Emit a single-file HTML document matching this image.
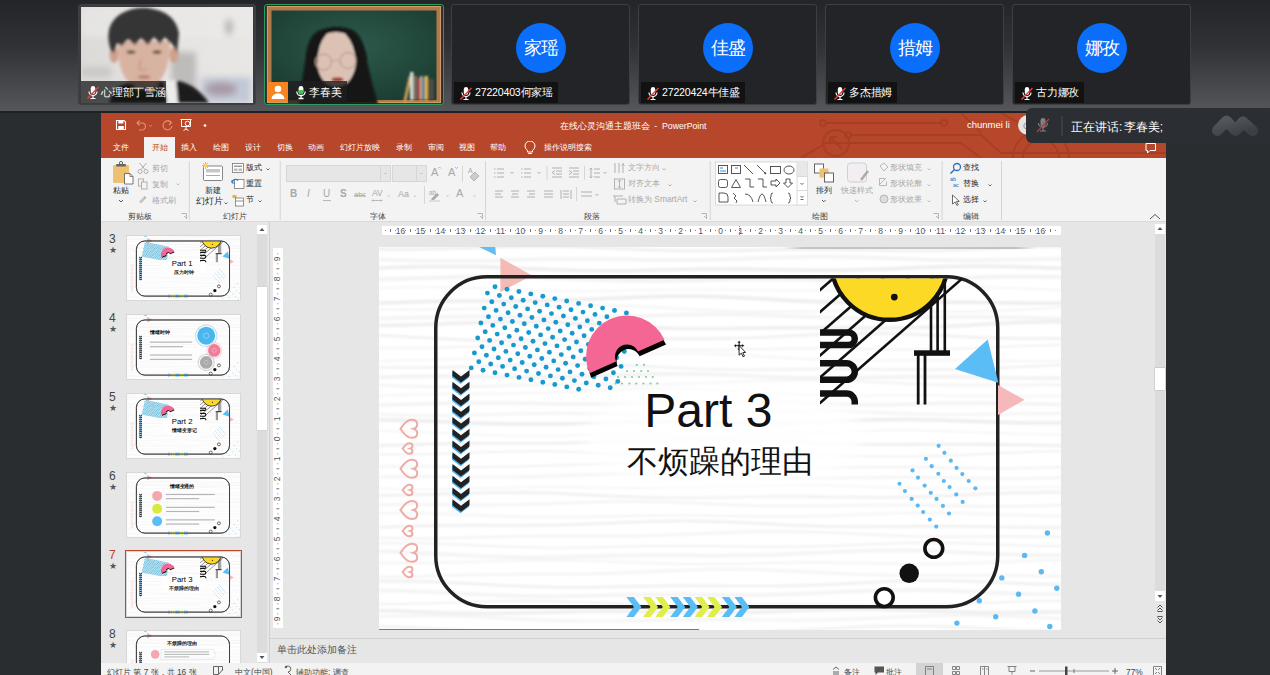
<!DOCTYPE html>
<html><head><meta charset="utf-8">
<style>
*{margin:0;padding:0;box-sizing:border-box}
html,body{width:1270px;height:675px;overflow:hidden;background:#2a2d30;font-family:"Liberation Sans",sans-serif;position:relative}
.a{position:absolute}
svg{display:block}
#top{left:0;top:0;width:1270px;height:112px;background:linear-gradient(#232528 0%,#2f3135 40%,#55575b 100%)}
#topline{left:0;top:111px;width:1270px;height:2px;background:#1f2124}
.tile{position:absolute;top:4px;height:101px;background:#232427;border:1px solid #3d3f43;border-radius:3px;overflow:hidden}
.av{position:absolute;width:50px;height:50px;border-radius:50%;background:#0a6efa;color:#fff;font-size:18px;line-height:50px;text-align:center;letter-spacing:-1px}
.lbl{position:absolute;left:2px;top:77px;height:21px;background:#121212;color:#fff;font-size:10.6px;line-height:21px;padding:0 5px 0 21px;white-space:nowrap;letter-spacing:-0.2px}
.mic{position:absolute;left:5px;top:4px}
#ppt{left:101px;top:113px;width:1065px;height:562px;background:#e6e6e6;overflow:hidden}
#title{left:0;top:0;width:1065px;height:45px;background:#b7472a;overflow:hidden}
#ribbon{left:0;top:45px;width:1065px;height:64px;background:#f3f3f3;border-bottom:1px solid #d9d9d9}
.tab{position:absolute;top:24px;height:21px;line-height:21px;color:#fff;font-size:8.4px;text-align:center;white-space:nowrap}
.rt{position:absolute;font-size:9.5px;color:#333;white-space:nowrap;line-height:12px}
.gr{color:#a8a8a8}
.gl{position:absolute;top:97px;font-size:9.5px;color:#444;line-height:12px;white-space:nowrap;transform:translateX(-50%)}
.sep{position:absolute;top:48px;width:1px;height:59px;background:#d6d6d6}
#status{left:0;top:550px;width:1065px;height:12px;background:#f3f3f3}
.st{position:absolute;top:0;font-size:9.5px;color:#444;line-height:14px;white-space:nowrap}
#slide{left:278px;top:134px;width:682px;height:383px;background:#fff;overflow:hidden}
.thumb{position:absolute;left:26px;width:113px;height:64px;background:#fff;overflow:hidden;box-shadow:0 0 0 1px #d8d8d8}
.tn{position:absolute;left:8px;font-size:12px;color:#444;line-height:12px}
.star{position:absolute;left:8px;font-size:9px;color:#555;line-height:10px}
#toast{left:1026px;top:108px;width:250px;height:35px;background:#2b2e32;border-radius:6px;overflow:hidden}
</style></head><body>
<svg width="0" height="0" style="position:absolute;left:0;top:0"><defs>
<filter id="tb" x="-5%" y="-20%" width="110%" height="140%"><feGaussianBlur stdDeviation="0.9"/></filter>
<filter id="blur8" x="-50%" y="-50%" width="200%" height="200%"><feGaussianBlur stdDeviation="8"/></filter>
<linearGradient id="shl"><stop offset="0" stop-color="#96a5a0" stop-opacity="0"/><stop offset="0.08" stop-color="#96a5a0" stop-opacity="0.6"/><stop offset="0.92" stop-color="#96a5a0" stop-opacity="0.6"/><stop offset="1" stop-color="#96a5a0" stop-opacity="0"/></linearGradient>
<clipPath id="gclip"><rect x="441" y="31.5" width="142.5" height="126"/></clipPath>
<symbol id="base" viewBox="0 0 682 383"><g filter="url(#tb)"><polyline points="0,2.2 10,2.3 20,2.3 30,2.3 40,2.2 50,2.0 60,1.8 70,1.6 80,1.3 90,1.0 100,0.6 110,0.3 120,0.0 130,-0.2 140,-0.5 150,-0.6 160,-0.6 170,-0.6 180,-0.5 190,-0.3 200,-0.0 210,0.3 220,0.7 230,1.2 240,1.6 250,2.1 260,2.5 270,2.9 280,3.2 290,3.5 300,3.7 310,3.8 320,3.8 330,3.8 340,3.7 350,3.6 360,3.4 370,3.2 380,3.0 390,2.8 400,2.6 410,2.5 420,2.4 430,2.4 440,2.4 450,2.5 460,2.6 470,2.8 480,2.9 490,3.1 500,3.3 510,3.4 520,3.6 530,3.6 540,3.6 550,3.5 560,3.4 570,3.2 580,2.9 590,2.5 600,2.1 610,1.7 620,1.2 630,0.8 640,0.4 650,0.0 660,-0.3 670,-0.5 680,-0.6 690,-0.7" fill="none" stroke="#efeded" stroke-width="2.5"/><polyline points="0,12.4 10,12.8 20,13.2 30,13.5 40,13.8 50,14.0 60,14.1 70,14.1 80,14.1 90,14.0 100,13.8 110,13.6 120,13.3 130,13.1 140,12.8 150,12.5 160,12.3 170,12.1 180,12.0 190,11.9 200,11.9 210,12.0 220,12.1 230,12.2 240,12.4 250,12.6 260,12.8 270,12.9 280,13.0 290,13.1 300,13.1 310,13.1 320,13.0 330,12.8 340,12.5 350,12.2 360,11.9 370,11.5 380,11.2 390,10.8 400,10.5 410,10.2 420,10.0 430,9.8 440,9.8 450,9.8 460,9.9 470,10.1 480,10.3 490,10.6 500,10.9 510,11.3 520,11.7 530,12.1 540,12.4 550,12.7 560,12.9 570,13.1 580,13.2 590,13.2 600,13.2 610,13.1 620,13.0 630,12.8 640,12.6 650,12.5 660,12.3 670,12.1 680,12.0 690,12.0" fill="none" stroke="#f5f3f3" stroke-width="3.5"/><polyline points="0,20.9 10,20.6 20,20.3 30,20.0 40,19.8 50,19.6 60,19.5 70,19.5 80,19.5 90,19.6 100,19.8 110,20.1 120,20.4 130,20.8 140,21.3 150,21.7 160,22.1 170,22.6 180,22.9 190,23.3 200,23.5 210,23.7 220,23.8 230,23.8 240,23.8 250,23.7 260,23.5 270,23.3 280,23.1 290,22.9 300,22.6 310,22.4 320,22.3 330,22.2 340,22.1 350,22.1 360,22.2 370,22.3 380,22.4 390,22.6 400,22.7 410,22.9 420,23.1 430,23.2 440,23.2 450,23.2 460,23.2 470,23.0 480,22.8 490,22.6 500,22.2 510,21.9 520,21.5 530,21.0 540,20.6 550,20.3 560,19.9 570,19.6 580,19.4 590,19.3 600,19.2 610,19.3 620,19.4 630,19.6 640,19.9 650,20.2 660,20.5 670,20.9 680,21.3 690,21.6" fill="none" stroke="#efeded" stroke-width="3.5"/><polyline points="0,32.2 10,32.1 20,31.9 30,31.6 40,31.3 50,31.0 60,30.7 70,30.4 80,30.1 90,29.9 100,29.8 110,29.7 120,29.7 130,29.8 140,30.0 150,30.2 160,30.5 170,30.9 180,31.3 190,31.7 200,32.2 210,32.6 220,32.9 230,33.3 240,33.5 250,33.7 260,33.8 270,33.9 280,33.9 290,33.8 300,33.6 310,33.4 320,33.2 330,33.0 340,32.8 350,32.6 360,32.4 370,32.3 380,32.2 390,32.2 400,32.3 410,32.4 420,32.5 430,32.7 440,32.9 450,33.1 460,33.3 470,33.4 480,33.5 490,33.5 500,33.5 510,33.4 520,33.2 530,32.9 540,32.6 550,32.3 560,31.9 570,31.5 580,31.1 590,30.7 600,30.3 610,30.0 620,29.8 630,29.6 640,29.6 650,29.6 660,29.7 670,29.8 680,30.1 690,30.4" fill="none" stroke="#f3f1f1" stroke-width="3.5"/><polyline points="0,41.2 10,40.9 20,40.6 30,40.5 40,40.3 50,40.3 60,40.3 70,40.4 80,40.6 90,40.9 100,41.2 110,41.6 120,42.0 130,42.4 140,42.8 150,43.2 160,43.5 170,43.8 180,44.0 190,44.2 200,44.2 210,44.2 220,44.1 230,44.0 240,43.8 250,43.6 260,43.3 270,43.1 280,42.9 290,42.7 300,42.5 310,42.4 320,42.4 330,42.4 340,42.4 350,42.5 360,42.7 370,42.9 380,43.1 390,43.3 400,43.4 410,43.6 420,43.7 430,43.7 440,43.7 450,43.5 460,43.4 470,43.1 480,42.8 490,42.5 500,42.1 510,41.7 520,41.3 530,41.0 540,40.7 550,40.4 560,40.2 570,40.1 580,40.1 590,40.1 600,40.3 610,40.5 620,40.8 630,41.1 640,41.4 650,41.8 660,42.1 670,42.4 680,42.7 690,43.0" fill="none" stroke="#f5f3f3" stroke-width="1.5"/><polyline points="0,56.1 10,55.8 20,55.4 30,55.1 40,54.8 50,54.6 60,54.4 70,54.2 80,54.1 90,54.0 100,54.0 110,54.0 120,53.9 130,53.9 140,53.9 150,53.8 160,53.6 170,53.5 180,53.2 190,52.9 200,52.6 210,52.2 220,51.8 230,51.3 240,50.9 250,50.4 260,50.0 270,49.7 280,49.4 290,49.2 300,49.2 310,49.2 320,49.3 330,49.5 340,49.8 350,50.2 360,50.7 370,51.2 380,51.7 390,52.3 400,52.9 410,53.4 420,53.9 430,54.3 440,54.7 450,54.9 460,55.2 470,55.3 480,55.4 490,55.4 500,55.4 510,55.3 520,55.3 530,55.2 540,55.2 550,55.1 560,55.1 570,55.2 580,55.2 590,55.3 600,55.5 610,55.6 620,55.8 630,55.9 640,56.1 650,56.2 660,56.2 670,56.2 680,56.1 690,55.9" fill="none" stroke="#efeded" stroke-width="3.5"/><polyline points="0,62.6 10,62.5 20,62.5 30,62.5 40,62.4 50,62.4 60,62.3 70,62.2 80,62.0 90,61.8 100,61.6 110,61.2 120,60.9 130,60.5 140,60.1 150,59.7 160,59.3 170,59.0 180,58.7 190,58.5 200,58.3 210,58.3 220,58.3 230,58.5 240,58.8 250,59.1 260,59.5 270,60.0 280,60.6 290,61.1 300,61.7 310,62.3 320,62.8 330,63.3 340,63.7 350,64.1 360,64.4 370,64.6 380,64.7 390,64.7 400,64.7 410,64.7 420,64.6 430,64.5 440,64.4 450,64.3 460,64.2 470,64.1 480,64.1 490,64.1 500,64.2 510,64.3 520,64.4 530,64.5 540,64.6 550,64.7 560,64.8 570,64.8 580,64.7 590,64.6 600,64.4 610,64.1 620,63.8 630,63.3 640,62.9 650,62.3 660,61.7 670,61.2 680,60.6 690,60.0" fill="none" stroke="#f5f3f3" stroke-width="2"/><polyline points="0,71.6 10,71.3 20,71.1 30,70.8 40,70.5 50,70.2 60,70.0 70,69.8 80,69.7 90,69.6 100,69.6 110,69.7 120,69.8 130,69.9 140,70.0 150,70.2 160,70.3 170,70.4 180,70.5 190,70.6 200,70.5 210,70.4 220,70.3 230,70.1 240,69.8 250,69.5 260,69.1 270,68.8 280,68.4 290,68.1 300,67.8 310,67.6 320,67.4 330,67.3 340,67.3 350,67.4 360,67.5 370,67.8 380,68.1 390,68.4 400,68.8 410,69.2 420,69.6 430,70.0 440,70.3 450,70.6 460,70.9 470,71.0 480,71.1 490,71.1 500,71.1 510,71.0 520,70.9 530,70.7 540,70.5 550,70.3 560,70.2 570,70.0 580,69.9 590,69.9 600,69.9 610,70.0 620,70.1 630,70.3 640,70.5 650,70.7 660,71.0 670,71.2 680,71.4 690,71.5" fill="none" stroke="#f5f3f3" stroke-width="3.5"/><polyline points="0,78.5 10,78.3 20,78.2 30,77.9 40,77.7 50,77.3 60,77.0 70,76.6 80,76.2 90,75.9 100,75.6 110,75.3 120,75.1 130,74.9 140,74.9 150,75.0 160,75.1 170,75.4 180,75.7 190,76.2 200,76.7 210,77.2 220,77.8 230,78.4 240,79.0 250,79.6 260,80.1 270,80.5 280,80.9 290,81.2 300,81.4 310,81.6 320,81.6 330,81.6 340,81.6 350,81.5 360,81.3 370,81.2 380,81.1 390,80.9 400,80.8 410,80.8 420,80.8 430,80.8 440,80.8 450,80.9 460,81.0 470,81.1 480,81.1 490,81.2 500,81.2 510,81.1 520,81.0 530,80.8 540,80.5 550,80.2 560,79.8 570,79.3 580,78.7 590,78.2 600,77.6 610,77.0 620,76.5 630,76.0 640,75.6 650,75.2 660,75.0 670,74.8 680,74.7 690,74.8" fill="none" stroke="#f1eeee" stroke-width="3.5"/><polyline points="0,88.3 10,88.8 20,89.3 30,89.9 40,90.4 50,91.0 60,91.6 70,92.1 80,92.5 90,92.9 100,93.2 110,93.4 120,93.5 130,93.5 140,93.4 150,93.3 160,93.1 170,92.9 180,92.7 190,92.5 200,92.2 210,92.0 220,91.8 230,91.7 240,91.6 250,91.6 260,91.6 270,91.6 280,91.6 290,91.7 300,91.7 310,91.7 320,91.7 330,91.7 340,91.5 350,91.3 360,91.1 370,90.8 380,90.4 390,90.0 400,89.5 410,89.0 420,88.5 430,88.1 440,87.6 450,87.2 460,86.9 470,86.7 480,86.6 490,86.5 500,86.6 510,86.8 520,87.0 530,87.3 540,87.7 550,88.2 560,88.6 570,89.1 580,89.6 590,90.0 600,90.4 610,90.8 620,91.1 630,91.3 640,91.4 650,91.5 660,91.6 670,91.6 680,91.6 690,91.5" fill="none" stroke="#f1eeee" stroke-width="2.5"/><polyline points="0,101.0 10,101.1 20,101.1 30,101.1 40,101.0 50,100.8 60,100.6 70,100.3 80,100.0 90,99.7 100,99.4 110,99.0 120,98.7 130,98.5 140,98.3 150,98.1 160,98.1 170,98.1 180,98.2 190,98.4 200,98.7 210,99.1 220,99.5 230,99.9 240,100.4 250,100.9 260,101.3 270,101.7 280,102.1 290,102.4 300,102.6 310,102.8 320,102.8 330,102.8 340,102.8 350,102.7 360,102.5 370,102.3 380,102.1 390,101.9 400,101.8 410,101.6 420,101.6 430,101.5 440,101.5 450,101.6 460,101.7 470,101.9 480,102.0 490,102.2 500,102.3 510,102.5 520,102.6 530,102.6 540,102.6 550,102.5 560,102.3 570,102.1 580,101.8 590,101.4 600,101.0 610,100.6 620,100.1 630,99.7 640,99.2 650,98.8 660,98.5 670,98.3 680,98.1 690,98.0" fill="none" stroke="#f1eeee" stroke-width="1.5"/><polyline points="0,114.3 10,113.9 20,113.6 30,113.3 40,113.0 50,112.7 60,112.5 70,112.3 80,112.1 90,112.0 100,111.9 110,111.8 120,111.8 130,111.7 140,111.6 150,111.5 160,111.3 170,111.1 180,110.8 190,110.5 200,110.1 210,109.7 220,109.2 230,108.8 240,108.3 250,107.9 260,107.4 270,107.1 280,106.8 290,106.6 300,106.5 310,106.5 320,106.6 330,106.8 340,107.2 350,107.6 360,108.1 370,108.6 380,109.2 390,109.8 400,110.4 410,110.9 420,111.5 430,112.0 440,112.4 450,112.7 460,113.0 470,113.2 480,113.3 490,113.4 500,113.4 510,113.4 520,113.3 530,113.3 540,113.3 550,113.2 560,113.3 570,113.3 580,113.4 590,113.5 600,113.6 610,113.8 620,113.9 630,114.0 640,114.2 650,114.2 660,114.3 670,114.2 680,114.1 690,113.9" fill="none" stroke="#f3f1f1" stroke-width="1.5"/><polyline points="0,120.5 10,120.5 20,120.5 30,120.5 40,120.5 50,120.4 60,120.3 70,120.2 80,119.9 90,119.7 100,119.3 110,119.0 120,118.6 130,118.2 140,117.9 150,117.5 160,117.3 170,117.1 180,116.9 190,116.9 200,116.9 210,117.1 220,117.3 230,117.7 240,118.1 250,118.5 260,119.0 270,119.6 280,120.1 290,120.6 300,121.1 310,121.6 320,122.0 330,122.3 340,122.5 350,122.7 360,122.7 370,122.7 380,122.7 390,122.6 400,122.5 410,122.3 420,122.2 430,122.1 440,122.0 450,121.9 460,121.9 470,121.9 480,122.0 490,122.1 500,122.2 510,122.3 520,122.4 530,122.6 540,122.6 550,122.7 560,122.6 570,122.6 580,122.4 590,122.2 600,121.8 610,121.4 620,121.0 630,120.5 640,120.0 650,119.4 660,118.9 670,118.4 680,117.9 690,117.6" fill="none" stroke="#f3f1f1" stroke-width="2.5"/><polyline points="0,130.2 10,130.0 20,129.7 30,129.5 40,129.4 50,129.3 60,129.3 70,129.3 80,129.4 90,129.6 100,129.7 110,129.8 120,130.0 130,130.1 140,130.2 150,130.2 160,130.2 170,130.1 180,129.9 190,129.7 200,129.5 210,129.1 220,128.8 230,128.5 240,128.1 250,127.8 260,127.5 270,127.3 280,127.1 290,127.0 300,127.0 310,127.1 320,127.3 330,127.5 340,127.8 350,128.2 360,128.6 370,129.0 380,129.4 390,129.8 400,130.2 410,130.5 420,130.7 430,130.9 440,131.0 450,131.0 460,130.9 470,130.8 480,130.7 490,130.5 500,130.3 510,130.2 520,130.0 530,129.8 540,129.8 550,129.7 560,129.7 570,129.8 580,129.9 590,130.1 600,130.3 610,130.5 620,130.7 630,130.9 640,131.1 650,131.2 660,131.3 670,131.3 680,131.3 690,131.2" fill="none" stroke="#f3f1f1" stroke-width="3.5"/><polyline points="0,138.1 10,138.6 20,139.0 30,139.3 40,139.6 50,139.8 60,139.9 70,139.8 80,139.8 90,139.6 100,139.4 110,139.2 120,138.9 130,138.6 140,138.4 150,138.1 160,137.9 170,137.8 180,137.7 190,137.6 200,137.6 210,137.6 220,137.7 230,137.7 240,137.8 250,137.8 260,137.8 270,137.7 280,137.6 290,137.5 300,137.2 310,136.9 320,136.6 330,136.2 340,135.7 350,135.3 360,134.8 370,134.4 380,134.0 390,133.6 400,133.4 410,133.2 420,133.1 430,133.0 440,133.1 450,133.3 460,133.6 470,133.9 480,134.4 490,134.8 500,135.3 510,135.8 520,136.2 530,136.7 540,137.1 550,137.4 560,137.7 570,137.9 580,138.0 590,138.1 600,138.1 610,138.1 620,138.1 630,138.0 640,137.9 650,137.9 660,137.8 670,137.8 680,137.9 690,138.0" fill="none" stroke="#f5f3f3" stroke-width="2.5"/><polyline points="0,148.7 10,148.4 20,148.1 30,147.8 40,147.6 50,147.4 60,147.2 70,147.1 80,147.0 90,146.9 100,146.8 110,146.8 120,146.7 130,146.5 140,146.4 150,146.1 160,145.9 170,145.5 180,145.1 190,144.7 200,144.3 210,143.8 220,143.3 230,142.9 240,142.5 250,142.2 260,141.9 270,141.8 280,141.7 290,141.7 300,141.9 310,142.1 320,142.5 330,142.9 340,143.4 350,144.0 360,144.6 370,145.2 380,145.8 390,146.4 400,146.9 410,147.4 420,147.8 430,148.1 440,148.4 450,148.5 460,148.7 470,148.7 480,148.7 490,148.7 500,148.6 510,148.6 520,148.5 530,148.5 540,148.5 550,148.6 560,148.6 570,148.7 580,148.8 590,149.0 600,149.1 610,149.2 620,149.3 630,149.4 640,149.4 650,149.3 660,149.2 670,148.9 680,148.6 690,148.2" fill="none" stroke="#f3f1f1" stroke-width="1.5"/><polyline points="0,158.0 10,157.8 20,157.6 30,157.3 40,157.0 50,156.7 60,156.5 70,156.2 80,156.1 90,156.0 100,155.9 110,155.9 120,156.0 130,156.1 140,156.3 150,156.5 160,156.6 170,156.8 180,157.0 190,157.1 200,157.1 210,157.1 220,157.1 230,156.9 240,156.7 250,156.5 260,156.2 270,155.8 280,155.5 290,155.2 300,154.8 310,154.5 320,154.3 330,154.1 340,154.0 350,154.0 360,154.1 370,154.3 380,154.5 390,154.8 400,155.1 410,155.5 420,155.8 430,156.2 440,156.6 450,156.9 460,157.2 470,157.4 480,157.5 490,157.6 500,157.6 510,157.5 520,157.4 530,157.2 540,157.0 550,156.8 560,156.6 570,156.4 580,156.3 590,156.2 600,156.1 610,156.2 620,156.2 630,156.4 640,156.5 650,156.7 660,157.0 670,157.2 680,157.5 690,157.7" fill="none" stroke="#f5f3f3" stroke-width="3.5"/><polyline points="0,167.3 10,167.7 20,168.0 30,168.3 40,168.4 50,168.5 60,168.5 70,168.5 80,168.3 90,168.1 100,167.9 110,167.6 120,167.4 130,167.1 140,166.8 150,166.6 160,166.5 170,166.4 180,166.3 190,166.3 200,166.4 210,166.5 220,166.6 230,166.8 240,166.9 250,167.1 260,167.2 270,167.3 280,167.3 290,167.3 300,167.2 310,167.0 320,166.7 330,166.5 340,166.1 350,165.8 360,165.4 370,165.0 380,164.6 390,164.3 400,164.1 410,163.9 420,163.8 430,163.8 440,163.8 450,164.0 460,164.2 470,164.5 480,164.8 490,165.2 500,165.6 510,166.0 520,166.4 530,166.7 540,167.0 550,167.2 560,167.4 570,167.5 580,167.5 590,167.5 600,167.4 610,167.2 620,167.1 630,166.9 640,166.8 650,166.6 660,166.5 670,166.4 680,166.4 690,166.5" fill="none" stroke="#f5f3f3" stroke-width="2.5"/><polyline points="0,172.9 10,173.0 20,173.2 30,173.4 40,173.7 50,174.1 60,174.5 70,174.9 80,175.4 90,175.8 100,176.2 110,176.5 120,176.8 130,177.0 140,177.1 150,177.1 160,177.1 170,177.0 180,176.9 190,176.7 200,176.4 210,176.2 220,175.9 230,175.7 240,175.5 250,175.3 260,175.2 270,175.2 280,175.2 290,175.3 300,175.4 310,175.5 320,175.7 330,175.9 340,176.0 350,176.2 360,176.3 370,176.3 380,176.3 390,176.2 400,176.1 410,175.8 420,175.6 430,175.2 440,174.9 450,174.5 460,174.1 470,173.7 480,173.4 490,173.1 500,172.8 510,172.7 520,172.6 530,172.6 540,172.7 550,172.9 560,173.1 570,173.4 580,173.8 590,174.2 600,174.5 610,174.9 620,175.2 630,175.5 640,175.8 650,175.9 660,176.0 670,176.1 680,176.1 690,176.0" fill="none" stroke="#efeded" stroke-width="3.5"/><polyline points="0,183.8 10,184.0 20,184.2 30,184.5 40,184.9 50,185.4 60,185.8 70,186.3 80,186.8 90,187.3 100,187.7 110,188.1 120,188.4 130,188.7 140,188.8 150,188.9 160,188.9 170,188.8 180,188.7 190,188.5 200,188.3 210,188.1 220,187.8 230,187.6 240,187.4 250,187.3 260,187.2 270,187.1 280,187.1 290,187.1 300,187.2 310,187.3 320,187.4 330,187.6 340,187.7 350,187.7 360,187.7 370,187.7 380,187.6 390,187.5 400,187.2 410,186.9 420,186.6 430,186.2 440,185.7 450,185.3 460,184.9 470,184.5 480,184.1 490,183.8 500,183.5 510,183.4 520,183.3 530,183.4 540,183.5 550,183.7 560,184.0 570,184.3 580,184.7 590,185.1 600,185.5 610,185.9 620,186.3 630,186.6 640,186.9 650,187.1 660,187.3 670,187.4 680,187.4 690,187.4" fill="none" stroke="#f5f3f3" stroke-width="1.5"/><polyline points="0,198.6 10,198.3 20,198.0 30,197.7 40,197.4 50,197.1 60,196.9 70,196.7 80,196.5 90,196.4 100,196.3 110,196.3 120,196.3 130,196.3 140,196.3 150,196.3 160,196.2 170,196.2 180,196.0 190,195.9 200,195.6 210,195.3 220,195.0 230,194.6 240,194.2 250,193.7 260,193.3 270,192.9 280,192.5 290,192.2 300,191.9 310,191.8 320,191.7 330,191.7 340,191.9 350,192.1 360,192.4 370,192.8 380,193.3 390,193.8 400,194.3 410,194.9 420,195.4 430,195.9 440,196.3 450,196.7 460,197.0 470,197.2 480,197.4 490,197.5 500,197.5 510,197.5 520,197.5 530,197.4 540,197.3 550,197.2 560,197.2 570,197.2 580,197.2 590,197.2 600,197.3 610,197.4 620,197.6 630,197.8 640,198.0 650,198.1 660,198.3 670,198.4 680,198.4 690,198.4" fill="none" stroke="#efeded" stroke-width="2.5"/><polyline points="0,207.5 10,207.5 20,207.5 30,207.4 40,207.2 50,207.0 60,206.7 70,206.4 80,206.1 90,205.8 100,205.4 110,205.1 120,204.8 130,204.5 140,204.4 150,204.3 160,204.3 170,204.3 180,204.5 190,204.8 200,205.1 210,205.6 220,206.0 230,206.5 240,207.0 250,207.6 260,208.0 270,208.5 280,208.9 290,209.2 300,209.5 310,209.6 320,209.7 330,209.7 340,209.7 350,209.6 360,209.5 370,209.3 380,209.1 390,209.0 400,208.8 410,208.7 420,208.7 430,208.6 440,208.7 450,208.7 460,208.8 470,208.9 480,209.1 490,209.2 500,209.3 510,209.4 520,209.4 530,209.4 540,209.3 550,209.2 560,208.9 570,208.6 580,208.2 590,207.8 600,207.3 610,206.8 620,206.3 630,205.8 640,205.4 650,205.0 660,204.6 670,204.4 680,204.2 690,204.1" fill="none" stroke="#efeded" stroke-width="1.5"/><polyline points="0,219.5 10,219.4 20,219.4 30,219.4 40,219.4 50,219.5 60,219.6 70,219.7 80,219.8 90,219.9 100,219.9 110,219.9 120,219.8 130,219.7 140,219.5 150,219.2 160,218.9 170,218.6 180,218.2 190,217.9 200,217.5 210,217.2 220,216.9 230,216.7 240,216.6 250,216.6 260,216.6 270,216.8 280,217.0 290,217.3 300,217.6 310,218.1 320,218.5 330,219.0 340,219.4 350,219.8 360,220.2 370,220.5 380,220.8 390,221.0 400,221.1 410,221.2 420,221.1 430,221.1 440,220.9 450,220.8 460,220.6 470,220.4 480,220.3 490,220.2 500,220.1 510,220.1 520,220.1 530,220.1 540,220.3 550,220.4 560,220.6 570,220.8 580,221.0 590,221.1 600,221.3 610,221.4 620,221.4 630,221.4 640,221.2 650,221.0 660,220.8 670,220.4 680,220.1 690,219.6" fill="none" stroke="#f3f1f1" stroke-width="2"/><polyline points="0,230.0 10,229.8 20,229.7 30,229.6 40,229.6 50,229.6 60,229.7 70,229.8 80,229.9 90,230.0 100,230.1 110,230.1 120,230.1 130,230.0 140,229.9 150,229.7 160,229.4 170,229.1 180,228.8 190,228.5 200,228.1 210,227.7 220,227.4 230,227.1 240,226.9 250,226.8 260,226.7 270,226.7 280,226.8 290,227.0 300,227.3 310,227.7 320,228.1 330,228.5 340,229.0 350,229.4 360,229.9 370,230.3 380,230.6 390,230.9 400,231.1 410,231.2 420,231.3 430,231.3 440,231.2 450,231.1 460,231.0 470,230.8 480,230.7 490,230.5 500,230.4 510,230.3 520,230.3 530,230.3 540,230.3 550,230.4 560,230.6 570,230.8 580,231.0 590,231.2 600,231.3 610,231.5 620,231.6 630,231.6 640,231.6 650,231.5 660,231.3 670,231.1 680,230.7 690,230.3" fill="none" stroke="#f5f3f3" stroke-width="2.5"/><polyline points="0,241.6 10,241.8 20,242.1 30,242.2 40,242.3 50,242.3 60,242.2 70,242.0 80,241.8 90,241.6 100,241.3 110,241.0 120,240.8 130,240.5 140,240.3 150,240.2 160,240.1 170,240.0 180,240.1 190,240.1 200,240.3 210,240.4 220,240.6 230,240.8 240,241.0 250,241.1 260,241.2 270,241.3 280,241.3 290,241.2 300,241.1 310,240.9 320,240.6 330,240.3 340,240.0 350,239.6 360,239.3 370,239.0 380,238.7 390,238.4 400,238.2 410,238.1 420,238.1 430,238.1 440,238.3 450,238.5 460,238.7 470,239.1 480,239.4 490,239.8 500,240.2 510,240.5 520,240.8 530,241.1 540,241.3 550,241.4 560,241.5 570,241.5 580,241.4 590,241.3 600,241.1 610,240.9 620,240.7 630,240.5 640,240.4 650,240.2 660,240.2 670,240.1 680,240.1 690,240.2" fill="none" stroke="#f5f3f3" stroke-width="1.5"/><polyline points="0,248.5 10,248.4 20,248.3 30,248.1 40,247.8 50,247.5 60,247.2 70,246.8 80,246.5 90,246.2 100,245.9 110,245.7 120,245.6 130,245.5 140,245.5 150,245.6 160,245.8 170,246.1 180,246.5 190,246.9 200,247.4 210,247.9 220,248.4 230,248.9 240,249.3 250,249.7 260,250.1 270,250.4 280,250.6 290,250.7 300,250.8 310,250.7 320,250.7 330,250.5 340,250.4 350,250.2 360,250.0 370,249.8 380,249.7 390,249.6 400,249.5 410,249.5 420,249.5 430,249.6 440,249.7 450,249.9 460,250.0 470,250.1 480,250.2 490,250.3 500,250.4 510,250.3 520,250.2 530,250.1 540,249.8 550,249.5 560,249.1 570,248.7 580,248.2 590,247.7 600,247.3 610,246.8 620,246.4 630,246.0 640,245.7 650,245.5 660,245.4 670,245.3 680,245.4 690,245.5" fill="none" stroke="#f1eeee" stroke-width="2.5"/><polyline points="0,257.5 10,257.4 20,257.3 30,257.3 40,257.4 50,257.4 60,257.5 70,257.6 80,257.7 90,257.8 100,257.9 110,257.9 120,257.8 130,257.7 140,257.5 150,257.3 160,257.0 170,256.7 180,256.3 190,255.9 200,255.6 210,255.3 220,255.0 230,254.7 240,254.6 250,254.5 260,254.5 270,254.6 280,254.8 290,255.1 300,255.4 310,255.8 320,256.3 330,256.7 340,257.2 350,257.6 360,258.0 370,258.4 380,258.6 390,258.9 400,259.0 410,259.1 420,259.1 430,259.0 440,258.9 450,258.8 460,258.6 470,258.4 480,258.3 490,258.1 500,258.0 510,258.0 520,258.0 530,258.0 540,258.1 550,258.3 560,258.4 570,258.6 580,258.8 590,259.0 600,259.2 610,259.3 620,259.3 630,259.3 640,259.2 650,259.1 660,258.8 670,258.5 680,258.2 690,257.7" fill="none" stroke="#f5f3f3" stroke-width="2.5"/><polyline points="0,266.3 10,266.2 20,266.2 30,266.2 40,266.3 50,266.5 60,266.8 70,267.1 80,267.5 90,267.9 100,268.3 110,268.7 120,269.1 130,269.5 140,269.8 150,270.0 160,270.2 170,270.2 180,270.2 190,270.2 200,270.1 210,269.9 220,269.6 230,269.4 240,269.2 250,268.9 260,268.7 270,268.5 280,268.4 290,268.4 300,268.3 310,268.4 320,268.5 330,268.6 340,268.8 350,269.0 360,269.2 370,269.3 380,269.4 390,269.5 400,269.6 410,269.5 420,269.4 430,269.2 440,269.0 450,268.7 460,268.4 470,268.0 480,267.6 490,267.2 500,266.8 510,266.5 520,266.2 530,266.1 540,265.9 550,265.9 560,265.9 570,266.1 580,266.3 590,266.5 600,266.9 610,267.2 620,267.6 630,267.9 640,268.3 650,268.6 660,268.8 670,269.0 680,269.2 690,269.2" fill="none" stroke="#f5f3f3" stroke-width="2"/><polyline points="0,280.2 10,279.9 20,279.5 30,279.2 40,279.0 50,278.8 60,278.6 70,278.5 80,278.4 90,278.3 100,278.3 110,278.3 120,278.4 130,278.4 140,278.4 150,278.3 160,278.2 170,278.1 180,277.9 190,277.7 200,277.3 210,277.0 220,276.6 230,276.2 240,275.8 250,275.3 260,275.0 270,274.6 280,274.4 290,274.2 300,274.1 310,274.1 320,274.2 330,274.4 340,274.7 350,275.0 360,275.5 370,276.0 380,276.5 390,277.0 400,277.5 410,278.0 420,278.4 430,278.8 440,279.2 450,279.4 460,279.6 470,279.7 480,279.7 490,279.7 500,279.6 510,279.6 520,279.5 530,279.4 540,279.3 550,279.2 560,279.2 570,279.2 580,279.3 590,279.4 600,279.6 610,279.7 620,279.9 630,280.1 640,280.2 650,280.3 660,280.4 670,280.4 680,280.4 690,280.2" fill="none" stroke="#f1eeee" stroke-width="2.5"/><polyline points="0,290.9 10,291.1 20,291.3 30,291.4 40,291.5 50,291.4 60,291.3 70,291.1 80,290.8 90,290.5 100,290.3 110,290.0 120,289.7 130,289.5 140,289.3 150,289.2 160,289.1 170,289.1 180,289.0 190,289.1 200,289.1 210,289.1 220,289.2 230,289.1 240,289.1 250,289.0 260,288.9 270,288.6 280,288.4 290,288.0 300,287.6 310,287.2 320,286.8 330,286.3 340,285.9 350,285.5 360,285.1 370,284.8 380,284.6 390,284.5 400,284.4 410,284.5 420,284.7 430,284.9 440,285.3 450,285.7 460,286.1 470,286.6 480,287.1 490,287.6 500,288.1 510,288.5 520,288.9 530,289.2 540,289.4 550,289.6 560,289.7 570,289.7 580,289.7 590,289.7 600,289.6 610,289.6 620,289.5 630,289.5 640,289.4 650,289.5 660,289.5 670,289.7 680,289.8 690,290.0" fill="none" stroke="#f5f3f3" stroke-width="2.5"/><polyline points="0,296.3 10,296.2 20,296.2 30,296.2 40,296.3 50,296.5 60,296.8 70,297.2 80,297.6 90,298.0 100,298.4 110,298.9 120,299.3 130,299.7 140,300.1 150,300.3 160,300.5 170,300.7 180,300.7 190,300.7 200,300.6 210,300.4 220,300.2 230,300.0 240,299.8 250,299.5 260,299.3 270,299.1 280,299.0 290,298.9 300,298.9 310,298.9 320,299.0 330,299.1 340,299.2 350,299.4 360,299.5 370,299.7 380,299.8 390,299.9 400,299.9 410,299.8 420,299.7 430,299.5 440,299.2 450,298.9 460,298.5 470,298.1 480,297.7 490,297.3 500,296.9 510,296.6 520,296.3 530,296.1 540,295.9 550,295.9 560,295.9 570,296.0 580,296.2 590,296.5 600,296.8 610,297.1 620,297.5 630,297.9 640,298.3 650,298.6 660,298.9 670,299.1 680,299.3 690,299.4" fill="none" stroke="#f3f1f1" stroke-width="2"/><polyline points="0,304.4 10,304.6 20,305.0 30,305.5 40,306.0 50,306.5 60,307.1 70,307.6 80,308.2 90,308.7 100,309.1 110,309.5 120,309.8 130,310.1 140,310.2 150,310.2 160,310.2 170,310.1 180,310.0 190,309.8 200,309.5 210,309.3 220,309.1 230,308.9 240,308.7 250,308.6 260,308.5 270,308.4 280,308.4 290,308.5 300,308.5 310,308.6 320,308.6 330,308.7 340,308.7 350,308.6 360,308.5 370,308.4 380,308.1 390,307.9 400,307.5 410,307.1 420,306.6 430,306.1 440,305.7 450,305.2 460,304.7 470,304.3 480,304.0 490,303.7 500,303.5 510,303.5 520,303.5 530,303.6 540,303.8 550,304.1 560,304.5 570,304.9 580,305.4 590,305.8 600,306.3 610,306.7 620,307.1 630,307.5 640,307.8 650,308.0 660,308.2 670,308.3 680,308.3 690,308.3" fill="none" stroke="#f5f3f3" stroke-width="3.5"/><polyline points="0,315.6 10,315.7 20,315.8 30,315.9 40,315.8 50,315.8 60,315.6 70,315.4 80,315.2 90,314.9 100,314.6 110,314.3 120,313.9 130,313.7 140,313.4 150,313.2 160,313.1 170,313.0 180,313.1 190,313.2 200,313.4 210,313.7 220,314.0 230,314.4 240,314.8 250,315.2 260,315.6 270,316.0 280,316.4 290,316.6 300,316.9 310,317.0 320,317.1 330,317.1 340,317.0 350,316.9 360,316.7 370,316.5 380,316.3 390,316.1 400,315.9 410,315.7 420,315.6 430,315.5 440,315.5 450,315.6 460,315.7 470,315.8 480,316.0 490,316.2 500,316.4 510,316.6 520,316.7 530,316.9 540,316.9 550,316.9 560,316.9 570,316.7 580,316.5 590,316.2 600,315.9 610,315.5 620,315.1 630,314.7 640,314.3 650,313.9 660,313.6 670,313.3 680,313.1 690,313.0" fill="none" stroke="#f5f3f3" stroke-width="2"/><polyline points="0,330.2 10,330.1 20,329.9 30,329.7 40,329.4 50,329.1 60,328.8 70,328.5 80,328.2 90,328.0 100,327.7 110,327.6 120,327.5 130,327.4 140,327.3 150,327.3 160,327.3 170,327.3 180,327.2 190,327.2 200,327.0 210,326.9 220,326.6 230,326.4 240,326.0 250,325.6 260,325.2 270,324.7 280,324.3 290,323.8 300,323.4 310,323.0 320,322.7 330,322.4 340,322.3 350,322.2 360,322.2 370,322.4 380,322.6 390,323.0 400,323.4 410,323.9 420,324.4 430,325.0 440,325.5 450,326.1 460,326.6 470,327.0 480,327.4 490,327.7 500,328.0 510,328.2 520,328.3 530,328.3 540,328.4 550,328.3 560,328.3 570,328.2 580,328.2 590,328.2 600,328.2 610,328.2 620,328.3 630,328.4 640,328.6 650,328.8 660,328.9 670,329.1 680,329.3 690,329.4" fill="none" stroke="#f5f3f3" stroke-width="2.5"/><polyline points="0,334.3 10,334.2 20,334.2 30,334.3 40,334.4 50,334.7 60,335.1 70,335.5 80,336.0 90,336.5 100,337.1 110,337.6 120,338.2 130,338.7 140,339.1 150,339.5 160,339.8 170,340.1 180,340.2 190,340.3 200,340.3 210,340.2 220,340.1 230,339.9 240,339.7 250,339.5 260,339.3 270,339.1 280,338.9 290,338.8 300,338.7 310,338.7 320,338.7 330,338.8 340,338.8 350,338.9 360,339.0 370,339.0 380,339.0 390,339.0 400,338.9 410,338.8 420,338.5 430,338.2 440,337.9 450,337.5 460,337.0 470,336.5 480,336.0 490,335.5 500,335.1 510,334.6 520,334.3 530,334.0 540,333.8 550,333.7 560,333.7 570,333.8 580,334.0 590,334.3 600,334.6 610,335.0 620,335.5 630,335.9 640,336.4 650,336.8 660,337.2 670,337.5 680,337.8 690,338.0" fill="none" stroke="#f1eeee" stroke-width="2.5"/><polyline points="0,343.6 10,343.7 20,343.9 30,344.1 40,344.5 50,344.9 60,345.4 70,345.9 80,346.4 90,347.0 100,347.5 110,347.9 120,348.3 130,348.7 140,349.0 150,349.1 160,349.2 170,349.2 180,349.2 190,349.1 200,348.9 210,348.7 220,348.5 230,348.2 240,348.0 250,347.8 260,347.7 270,347.6 280,347.5 290,347.5 300,347.5 310,347.6 320,347.7 330,347.8 340,347.9 350,347.9 360,348.0 370,347.9 380,347.9 390,347.7 400,347.5 410,347.2 420,346.9 430,346.5 440,346.1 450,345.6 460,345.1 470,344.7 480,344.2 490,343.9 500,343.6 510,343.3 520,343.2 530,343.1 540,343.1 550,343.3 560,343.5 570,343.8 580,344.2 590,344.6 600,345.0 610,345.4 620,345.9 630,346.3 640,346.6 650,346.9 660,347.2 670,347.3 680,347.5 690,347.5" fill="none" stroke="#f5f3f3" stroke-width="3.5"/><polyline points="0,357.0 10,357.0 20,356.9 30,356.8 40,356.6 50,356.4 60,356.1 70,355.8 80,355.5 90,355.2 100,354.9 110,354.6 120,354.3 130,354.2 140,354.1 150,354.0 160,354.1 170,354.2 180,354.5 190,354.8 200,355.2 210,355.6 220,356.0 230,356.5 240,356.9 250,357.4 260,357.8 270,358.1 280,358.3 290,358.5 300,358.6 310,358.7 320,358.6 330,358.6 340,358.4 350,358.2 360,358.0 370,357.8 380,357.7 390,357.5 400,357.4 410,357.3 420,357.3 430,357.3 440,357.4 450,357.5 460,357.7 470,357.8 480,358.0 490,358.2 500,358.3 510,358.4 520,358.4 530,358.4 540,358.3 550,358.1 560,357.8 570,357.5 580,357.1 590,356.7 600,356.3 610,355.8 620,355.4 630,355.0 640,354.6 650,354.3 660,354.1 670,354.0 680,353.9 690,354.0" fill="none" stroke="#efeded" stroke-width="1.5"/><polyline points="0,363.4 10,363.7 20,364.1 30,364.5 40,364.9 50,365.3 60,365.6 70,365.9 80,366.1 90,366.3 100,366.4 110,366.4 120,366.3 130,366.2 140,366.0 150,365.7 160,365.5 170,365.2 180,365.0 190,364.7 200,364.5 210,364.4 220,364.3 230,364.3 240,364.3 250,364.4 260,364.5 270,364.7 280,364.9 290,365.1 300,365.3 310,365.4 320,365.5 330,365.6 340,365.6 350,365.6 360,365.4 370,365.2 380,365.0 390,364.7 400,364.3 410,364.0 420,363.6 430,363.3 440,363.0 450,362.7 460,362.5 470,362.4 480,362.3 490,362.4 500,362.5 510,362.7 520,362.9 530,363.2 540,363.6 550,363.9 560,364.3 570,364.6 580,364.9 590,365.2 600,365.4 610,365.5 620,365.6 630,365.6 640,365.5 650,365.4 660,365.2 670,365.1 680,364.9 690,364.7" fill="none" stroke="#f1eeee" stroke-width="3.5"/><polyline points="0,369.5 10,369.2 20,369.0 30,368.9 40,368.8 50,368.7 60,368.8 70,369.0 80,369.2 90,369.5 100,369.9 110,370.4 120,370.9 130,371.4 140,371.9 150,372.4 160,372.9 170,373.2 180,373.6 190,373.8 200,374.0 210,374.1 220,374.1 230,374.1 240,373.9 250,373.8 260,373.6 270,373.4 280,373.2 290,373.0 300,372.8 310,372.7 320,372.6 330,372.6 340,372.6 350,372.6 360,372.7 370,372.8 380,372.9 390,373.0 400,373.1 410,373.2 420,373.2 430,373.1 440,373.0 450,372.8 460,372.6 470,372.2 480,371.8 490,371.4 500,370.9 510,370.5 520,370.0 530,369.6 540,369.2 550,368.9 560,368.6 570,368.5 580,368.4 590,368.4 600,368.5 610,368.7 620,369.0 630,369.3 640,369.7 650,370.1 660,370.5 670,370.9 680,371.3 690,371.6" fill="none" stroke="#f5f3f3" stroke-width="2.5"/><polyline points="0,379.5 10,379.7 20,380.0 30,380.4 40,380.8 50,381.4 60,382.0 70,382.6 80,383.2 90,383.8 100,384.4 110,384.9 120,385.4 130,385.8 140,386.1 150,386.3 160,386.4 170,386.5 180,386.4 190,386.3 200,386.2 210,386.0 220,385.8 230,385.6 240,385.3 250,385.2 260,385.0 270,384.9 280,384.8 290,384.8 300,384.8 310,384.8 320,384.8 330,384.8 340,384.8 350,384.8 360,384.7 370,384.6 380,384.4 390,384.1 400,383.8 410,383.4 420,383.0 430,382.5 440,381.9 450,381.4 460,380.9 470,380.4 480,379.9 490,379.5 500,379.2 510,379.0 520,378.8 530,378.8 540,378.9 550,379.1 560,379.4 570,379.7 580,380.1 590,380.6 600,381.1 610,381.6 620,382.1 630,382.5 640,382.9 650,383.3 660,383.6 670,383.9 680,384.0 690,384.2" fill="none" stroke="#f3f1f1" stroke-width="2.5"/></g>
<polygon points="92,-4 116,-4 117,8.3" fill="#62bdf2"/>
<polygon points="121.4,10.8 121.4,45 153,28.5" fill="#f3bab6"/>
<rect x="56.75" y="29.75" width="562" height="330" rx="51" fill="none" stroke="#222" stroke-width="3.5"/>
<g><polygon points="73,124.5 81.5,131.0 90,124.5 90,130.5 81.5,137.0 73,130.5" fill="#4fb3ef"/><polygon points="73.5,123.0 82,129.5 90.5,123.0 90.5,129.0 82,135.5 73.5,129.0" fill="#222"/><polygon points="73,136.25 81.5,142.75 90,136.25 90,142.25 81.5,148.75 73,142.25" fill="#4fb3ef"/><polygon points="73.5,134.75 82,141.25 90.5,134.75 90.5,140.75 82,147.25 73.5,140.75" fill="#222"/><polygon points="73,148.0 81.5,154.5 90,148.0 90,154.0 81.5,160.5 73,154.0" fill="#4fb3ef"/><polygon points="73.5,146.5 82,153.0 90.5,146.5 90.5,152.5 82,159.0 73.5,152.5" fill="#222"/><polygon points="73,159.75 81.5,166.25 90,159.75 90,165.75 81.5,172.25 73,165.75" fill="#4fb3ef"/><polygon points="73.5,158.25 82,164.75 90.5,158.25 90.5,164.25 82,170.75 73.5,164.25" fill="#222"/><polygon points="73,171.5 81.5,178.0 90,171.5 90,177.5 81.5,184.0 73,177.5" fill="#4fb3ef"/><polygon points="73.5,170.0 82,176.5 90.5,170.0 90.5,176.0 82,182.5 73.5,176.0" fill="#222"/><polygon points="73,183.25 81.5,189.75 90,183.25 90,189.25 81.5,195.75 73,189.25" fill="#4fb3ef"/><polygon points="73.5,181.75 82,188.25 90.5,181.75 90.5,187.75 82,194.25 73.5,187.75" fill="#222"/><polygon points="73,195.0 81.5,201.5 90,195.0 90,201.0 81.5,207.5 73,201.0" fill="#4fb3ef"/><polygon points="73.5,193.5 82,200.0 90.5,193.5 90.5,199.5 82,206.0 73.5,199.5" fill="#222"/><polygon points="73,206.75 81.5,213.25 90,206.75 90,212.75 81.5,219.25 73,212.75" fill="#4fb3ef"/><polygon points="73.5,205.25 82,211.75 90.5,205.25 90.5,211.25 82,217.75 73.5,211.25" fill="#222"/><polygon points="73,218.5 81.5,225.0 90,218.5 90,224.5 81.5,231.0 73,224.5" fill="#4fb3ef"/><polygon points="73.5,217.0 82,223.5 90.5,217.0 90.5,223.0 82,229.5 73.5,223.0" fill="#222"/><polygon points="73,230.25 81.5,236.75 90,230.25 90,236.25 81.5,242.75 73,236.25" fill="#4fb3ef"/><polygon points="73.5,228.75 82,235.25 90.5,228.75 90.5,234.75 82,241.25 73.5,234.75" fill="#222"/><polygon points="73,242.0 81.5,248.5 90,242.0 90,248.0 81.5,254.5 73,248.0" fill="#4fb3ef"/><polygon points="73.5,240.5 82,247.0 90.5,240.5 90.5,246.5 82,253.0 73.5,246.5" fill="#222"/><polygon points="73,253.75 81.5,260.25 90,253.75 90,259.75 81.5,266.25 73,259.75" fill="#4fb3ef"/><polygon points="73.5,252.25 82,258.75 90.5,252.25 90.5,258.25 82,264.75 73.5,258.25" fill="#222"/></g>
<g fill="none" stroke="#eeaca6" stroke-width="2"><path transform="translate(30.5,181.8) rotate(90) scale(18)" stroke-width="0.111" d="M0 -0.22 C-0.08 -0.5 -0.5 -0.52 -0.5 -0.12 C-0.5 0.22 -0.12 0.4 0 0.5 C0.12 0.4 0.5 0.22 0.5 -0.12 C0.5 -0.52 0.08 -0.5 0 -0.22 Z"/><path transform="translate(30.5,221.8) rotate(90) scale(18)" stroke-width="0.111" d="M0 -0.22 C-0.08 -0.5 -0.5 -0.52 -0.5 -0.12 C-0.5 0.22 -0.12 0.4 0 0.5 C0.12 0.4 0.5 0.22 0.5 -0.12 C0.5 -0.52 0.08 -0.5 0 -0.22 Z"/><path transform="translate(30.5,263.0) rotate(90) scale(18)" stroke-width="0.111" d="M0 -0.22 C-0.08 -0.5 -0.5 -0.52 -0.5 -0.12 C-0.5 0.22 -0.12 0.4 0 0.5 C0.12 0.4 0.5 0.22 0.5 -0.12 C0.5 -0.52 0.08 -0.5 0 -0.22 Z"/><path transform="translate(30.5,305.8) rotate(90) scale(18)" stroke-width="0.111" d="M0 -0.22 C-0.08 -0.5 -0.5 -0.52 -0.5 -0.12 C-0.5 0.22 -0.12 0.4 0 0.5 C0.12 0.4 0.5 0.22 0.5 -0.12 C0.5 -0.52 0.08 -0.5 0 -0.22 Z"/><path transform="translate(29.0,201.5) rotate(90) scale(10.5)" stroke-width="0.190" d="M0 -0.22 C-0.08 -0.5 -0.5 -0.52 -0.5 -0.12 C-0.5 0.22 -0.12 0.4 0 0.5 C0.12 0.4 0.5 0.22 0.5 -0.12 C0.5 -0.52 0.08 -0.5 0 -0.22 Z"/><path transform="translate(29.0,243.0) rotate(90) scale(10.5)" stroke-width="0.190" d="M0 -0.22 C-0.08 -0.5 -0.5 -0.52 -0.5 -0.12 C-0.5 0.22 -0.12 0.4 0 0.5 C0.12 0.4 0.5 0.22 0.5 -0.12 C0.5 -0.52 0.08 -0.5 0 -0.22 Z"/><path transform="translate(29.0,284.0) rotate(90) scale(10.5)" stroke-width="0.190" d="M0 -0.22 C-0.08 -0.5 -0.5 -0.52 -0.5 -0.12 C-0.5 0.22 -0.12 0.4 0 0.5 C0.12 0.4 0.5 0.22 0.5 -0.12 C0.5 -0.52 0.08 -0.5 0 -0.22 Z"/><path transform="translate(29.0,325.0) rotate(90) scale(10.5)" stroke-width="0.190" d="M0 -0.22 C-0.08 -0.5 -0.5 -0.52 -0.5 -0.12 C-0.5 0.22 -0.12 0.4 0 0.5 C0.12 0.4 0.5 0.22 0.5 -0.12 C0.5 -0.52 0.08 -0.5 0 -0.22 Z"/></g>
<circle cx="554.8" cy="301.4" r="8.9" fill="none" stroke="#111" stroke-width="3.6"/>
<circle cx="530.2" cy="326.3" r="9.7" fill="#111"/>
<circle cx="505.3" cy="350.6" r="8.9" fill="#fff" stroke="#111" stroke-width="3.6"/>
<g fill="#5cb9f0"><circle cx="668.4" cy="286" r="2.7"/><circle cx="645.6" cy="308.4" r="2.7"/><circle cx="662.3" cy="324.8" r="2.7"/><circle cx="622.8" cy="330.9" r="2.7"/><circle cx="639.5" cy="347.3" r="2.7"/><circle cx="677.8" cy="341.2" r="2.7"/><circle cx="600.3" cy="353.7" r="2.7"/><circle cx="655.9" cy="364" r="2.7"/><circle cx="616.7" cy="369.8" r="2.7"/><circle cx="577.9" cy="376.1" r="2.7"/><circle cx="670.8" cy="379.5" r="2.7"/></g>
<g><polygon points="247.4,350 254.9,350 262.4,360 254.9,370 247.4,370 254.9,360" fill="#5bbdf5"/><polygon points="264,350 271.5,350 279,360 271.5,370 264,370 271.5,360" fill="#dfee4a"/><polygon points="276.3,350 283.8,350 291.3,360 283.8,370 276.3,370 283.8,360" fill="#dfee4a"/><polygon points="291.2,350 298.7,350 306.2,360 298.7,370 291.2,370 298.7,360" fill="#5bbdf5"/><polygon points="303.8,350 311.3,350 318.8,360 311.3,370 303.8,370 311.3,360" fill="#5bbdf5"/><polygon points="315.6,350 323.1,350 330.6,360 323.1,370 315.6,370 323.1,360" fill="#dfee4a"/><polygon points="328,350 335.5,350 343,360 335.5,370 328,370 335.5,360" fill="#dfee4a"/><polygon points="342.8,350 350.3,350 357.8,360 350.3,370 342.8,370 350.3,360" fill="#5bbdf5"/><polygon points="355.4,350 362.9,350 370.4,360 362.9,370 355.4,370 362.9,360" fill="#5bbdf5"/></g></symbol>
<symbol id="extra" viewBox="0 0 682 383"><ellipse cx="345" cy="190" rx="140" ry="55" fill="#fff" opacity="0.85" filter="url(#blur8)"/>
<g fill="#169ace"><circle cx="116.0" cy="39.8" r="2.45"/><circle cx="108.4" cy="46.1" r="2.45"/><circle cx="128.0" cy="42.2" r="2.45"/><circle cx="120.4" cy="48.5" r="2.45"/><circle cx="112.8" cy="54.8" r="2.45"/><circle cx="105.2" cy="61.1" r="2.45"/><circle cx="139.9" cy="44.5" r="2.45"/><circle cx="132.3" cy="50.8" r="2.45"/><circle cx="124.7" cy="57.1" r="2.45"/><circle cx="117.1" cy="63.4" r="2.45"/><circle cx="109.5" cy="69.7" r="2.45"/><circle cx="101.9" cy="76.0" r="2.45"/><circle cx="151.8" cy="46.9" r="2.45"/><circle cx="144.2" cy="53.2" r="2.45"/><circle cx="136.7" cy="59.5" r="2.45"/><circle cx="129.1" cy="65.8" r="2.45"/><circle cx="121.4" cy="72.1" r="2.45"/><circle cx="113.8" cy="78.4" r="2.45"/><circle cx="106.2" cy="84.7" r="2.45"/><circle cx="98.7" cy="91.0" r="2.45"/><circle cx="163.8" cy="49.3" r="2.45"/><circle cx="156.2" cy="55.6" r="2.45"/><circle cx="148.6" cy="61.9" r="2.45"/><circle cx="141.0" cy="68.2" r="2.45"/><circle cx="133.4" cy="74.5" r="2.45"/><circle cx="125.8" cy="80.8" r="2.45"/><circle cx="118.2" cy="87.1" r="2.45"/><circle cx="110.6" cy="93.4" r="2.45"/><circle cx="103.0" cy="99.7" r="2.45"/><circle cx="95.4" cy="106.0" r="2.45"/><circle cx="175.8" cy="51.6" r="2.45"/><circle cx="168.2" cy="57.9" r="2.45"/><circle cx="160.6" cy="64.2" r="2.45"/><circle cx="152.9" cy="70.5" r="2.45"/><circle cx="145.3" cy="76.8" r="2.45"/><circle cx="137.8" cy="83.2" r="2.45"/><circle cx="130.2" cy="89.4" r="2.45"/><circle cx="122.6" cy="95.8" r="2.45"/><circle cx="115.0" cy="102.0" r="2.45"/><circle cx="107.4" cy="108.3" r="2.45"/><circle cx="99.8" cy="114.7" r="2.45"/><circle cx="92.2" cy="120.9" r="2.45"/><circle cx="187.7" cy="54.0" r="2.45"/><circle cx="180.1" cy="60.3" r="2.45"/><circle cx="172.5" cy="66.6" r="2.45"/><circle cx="164.9" cy="72.9" r="2.45"/><circle cx="157.3" cy="79.2" r="2.45"/><circle cx="149.7" cy="85.5" r="2.45"/><circle cx="142.1" cy="91.8" r="2.45"/><circle cx="134.5" cy="98.1" r="2.45"/><circle cx="126.9" cy="104.4" r="2.45"/><circle cx="119.3" cy="110.7" r="2.45"/><circle cx="111.7" cy="117.0" r="2.45"/><circle cx="104.1" cy="123.3" r="2.45"/><circle cx="199.6" cy="56.4" r="2.45"/><circle cx="192.0" cy="62.7" r="2.45"/><circle cx="184.4" cy="69.0" r="2.45"/><circle cx="176.8" cy="75.3" r="2.45"/><circle cx="169.2" cy="81.6" r="2.45"/><circle cx="161.6" cy="87.9" r="2.45"/><circle cx="154.0" cy="94.2" r="2.45"/><circle cx="146.4" cy="100.5" r="2.45"/><circle cx="138.8" cy="106.8" r="2.45"/><circle cx="131.2" cy="113.1" r="2.45"/><circle cx="123.6" cy="119.4" r="2.45"/><circle cx="116.0" cy="125.7" r="2.45"/><circle cx="211.6" cy="58.8" r="2.45"/><circle cx="204.0" cy="65.1" r="2.45"/><circle cx="196.4" cy="71.4" r="2.45"/><circle cx="188.8" cy="77.7" r="2.45"/><circle cx="181.2" cy="84.0" r="2.45"/><circle cx="173.6" cy="90.3" r="2.45"/><circle cx="166.0" cy="96.6" r="2.45"/><circle cx="158.4" cy="102.9" r="2.45"/><circle cx="150.8" cy="109.2" r="2.45"/><circle cx="143.2" cy="115.5" r="2.45"/><circle cx="135.6" cy="121.8" r="2.45"/><circle cx="128.0" cy="128.1" r="2.45"/><circle cx="223.6" cy="61.1" r="2.45"/><circle cx="216.0" cy="67.4" r="2.45"/><circle cx="208.4" cy="73.7" r="2.45"/><circle cx="200.8" cy="80.0" r="2.45"/><circle cx="193.2" cy="86.3" r="2.45"/><circle cx="185.6" cy="92.6" r="2.45"/><circle cx="178.0" cy="98.9" r="2.45"/><circle cx="170.4" cy="105.2" r="2.45"/><circle cx="162.8" cy="111.5" r="2.45"/><circle cx="155.2" cy="117.8" r="2.45"/><circle cx="147.6" cy="124.1" r="2.45"/><circle cx="140.0" cy="130.4" r="2.45"/><circle cx="235.5" cy="63.5" r="2.45"/><circle cx="227.9" cy="69.8" r="2.45"/><circle cx="220.3" cy="76.1" r="2.45"/><circle cx="212.7" cy="82.4" r="2.45"/><circle cx="205.1" cy="88.7" r="2.45"/><circle cx="197.5" cy="95.0" r="2.45"/><circle cx="189.9" cy="101.3" r="2.45"/><circle cx="182.3" cy="107.6" r="2.45"/><circle cx="174.7" cy="113.9" r="2.45"/><circle cx="167.1" cy="120.2" r="2.45"/><circle cx="159.5" cy="126.5" r="2.45"/><circle cx="151.9" cy="132.8" r="2.45"/><circle cx="247.4" cy="65.9" r="2.45"/><circle cx="239.8" cy="72.2" r="2.45"/><circle cx="232.2" cy="78.5" r="2.45"/><circle cx="224.6" cy="84.8" r="2.45"/><circle cx="217.0" cy="91.1" r="2.45"/><circle cx="209.4" cy="97.4" r="2.45"/><circle cx="201.8" cy="103.7" r="2.45"/><circle cx="194.2" cy="110.0" r="2.45"/><circle cx="186.6" cy="116.3" r="2.45"/><circle cx="179.1" cy="122.6" r="2.45"/><circle cx="171.4" cy="128.9" r="2.45"/><circle cx="163.8" cy="135.2" r="2.45"/><circle cx="244.2" cy="80.8" r="2.45"/><circle cx="236.6" cy="87.1" r="2.45"/><circle cx="229.0" cy="93.4" r="2.45"/><circle cx="221.4" cy="99.7" r="2.45"/><circle cx="213.8" cy="106.0" r="2.45"/><circle cx="206.2" cy="112.3" r="2.45"/><circle cx="198.6" cy="118.6" r="2.45"/><circle cx="191.0" cy="124.9" r="2.45"/><circle cx="183.4" cy="131.2" r="2.45"/><circle cx="175.8" cy="137.5" r="2.45"/><circle cx="241.0" cy="95.8" r="2.45"/><circle cx="233.4" cy="102.1" r="2.45"/><circle cx="225.8" cy="108.4" r="2.45"/><circle cx="218.2" cy="114.7" r="2.45"/><circle cx="210.6" cy="121.0" r="2.45"/><circle cx="203.0" cy="127.3" r="2.45"/><circle cx="195.4" cy="133.6" r="2.45"/><circle cx="187.8" cy="139.9" r="2.45"/><circle cx="245.3" cy="104.5" r="2.45"/><circle cx="237.7" cy="110.8" r="2.45"/><circle cx="230.1" cy="117.1" r="2.45"/><circle cx="222.5" cy="123.4" r="2.45"/><circle cx="214.9" cy="129.7" r="2.45"/><circle cx="207.3" cy="136.0" r="2.45"/><circle cx="199.7" cy="142.3" r="2.45"/><circle cx="242.1" cy="119.4" r="2.45"/><circle cx="234.4" cy="125.8" r="2.45"/><circle cx="226.9" cy="132.0" r="2.45"/><circle cx="219.2" cy="138.3" r="2.45"/><circle cx="238.8" cy="134.4" r="2.45"/><circle cx="231.2" cy="140.7" r="2.45"/></g>
<g fill="#7fcf9a"><circle cx="257.8" cy="117.8" r="1.1"/><circle cx="264.9" cy="117.8" r="1.1"/><circle cx="248" cy="124" r="1.1"/><circle cx="255" cy="124" r="1.1"/><circle cx="262.2" cy="124" r="1.1"/><circle cx="269" cy="124" r="1.1"/><circle cx="239" cy="130" r="1.1"/><circle cx="246" cy="130" r="1.1"/><circle cx="253" cy="130" r="1.1"/><circle cx="260" cy="130" r="1.1"/><circle cx="267" cy="130" r="1.1"/><circle cx="273.8" cy="130" r="1.1"/><circle cx="236.5" cy="136.5" r="1.1"/><circle cx="243" cy="136.5" r="1.1"/><circle cx="250.4" cy="136.5" r="1.1"/><circle cx="257.3" cy="136.5" r="1.1"/><circle cx="264.4" cy="136.5" r="1.1"/><circle cx="271.5" cy="136.5" r="1.1"/><circle cx="278.3" cy="136.5" r="1.1"/></g>
<path d="M -41 0 A 41 41 0 0 1 41 0 L 12 0 A 12 12 0 0 0 -12 0 Z" fill="#000" transform="translate(249.6,114.1) rotate(-24)"/>
<path d="M -41 0 A 41 41 0 0 1 41 0 L 12 0 A 12 12 0 0 0 -12 0 Z" fill="#f46795" transform="translate(248,109.5) rotate(-24)"/>
<g clip-path="url(#gclip)"><line x1="436" y1="47.38" x2="596" y2="-92.62" stroke="#111" stroke-width="2.6"/><line x1="436" y1="69.38" x2="596" y2="-70.62" stroke="#111" stroke-width="2.6"/><line x1="436" y1="90.88" x2="596" y2="-49.12" stroke="#111" stroke-width="2.6"/><line x1="436" y1="112.88" x2="596" y2="-27.12" stroke="#111" stroke-width="2.6"/><line x1="436" y1="134.88" x2="596" y2="-5.12" stroke="#111" stroke-width="2.6"/><line x1="436" y1="160.38" x2="596" y2="20.38" stroke="#111" stroke-width="2.6"/><line x1="552" y1="20" x2="552" y2="104" stroke="#111" stroke-width="2.6"/><line x1="558.6" y1="20" x2="558.6" y2="104" stroke="#111" stroke-width="2.6"/><line x1="565.8" y1="20" x2="565.8" y2="104" stroke="#111" stroke-width="2.6"/><rect x="535" y="103.3" width="36" height="5.5" fill="#111"/><line x1="539.2" y1="108" x2="539.2" y2="160" stroke="#111" stroke-width="2.8"/><line x1="546" y1="108" x2="546" y2="160" stroke="#111" stroke-width="2.8"/><circle cx="510.5" cy="14.5" r="58.3" fill="#fcd925" stroke="#111" stroke-width="4.4"/><circle cx="515.3" cy="50.1" r="3.4" fill="#111"/><path d="M 420 85.4 H 469.5 A 6.3 6.3 0 0 1 469.5 98 H 420 M 420 116.2 H 467.5 A 8.3 8.3 0 0 1 467.5 132.8 H 420 M 420 146.6 H 467.75 A 8 8 0 0 1 475.75 154.6 V 170" fill="none" stroke="#111" stroke-width="6.5"/></g>
<polygon points="608.7,92.4 576,122 619.4,135.7" fill="#5bbdf5"/>
<polygon points="619,138 619,168 645.5,152.8" fill="#f5b8bb"/>
<g fill="#5cb9f0"><circle cx="559.65" cy="198.79" r="2.1"/><circle cx="565.42" cy="205.78" r="2.1"/><circle cx="571.8" cy="213.67" r="2.1"/><circle cx="577.57" cy="220.96" r="2.1"/><circle cx="583.34" cy="227.03" r="2.1"/><circle cx="589.72" cy="234.02" r="2.1"/><circle cx="596.4" cy="241.31" r="2.1"/><circle cx="546.9" cy="211.85" r="2.1"/><circle cx="552.67" cy="219.14" r="2.1"/><circle cx="559.35" cy="226.73" r="2.1"/><circle cx="564.81" cy="234.02" r="2.1"/><circle cx="570.58" cy="240.09" r="2.1"/><circle cx="577.26" cy="247.38" r="2.1"/><circle cx="583.64" cy="254.97" r="2.1"/><circle cx="533.54" cy="223.39" r="2.1"/><circle cx="539.0" cy="230.68" r="2.1"/><circle cx="545.68" cy="238.57" r="2.1"/><circle cx="551.76" cy="245.86" r="2.1"/><circle cx="557.53" cy="251.93" r="2.1"/><circle cx="563.9" cy="258.92" r="2.1"/><circle cx="569.98" cy="266.51" r="2.1"/><circle cx="520.48" cy="236.75" r="2.1"/><circle cx="525.94" cy="244.04" r="2.1"/><circle cx="532.62" cy="251.93" r="2.1"/><circle cx="538.7" cy="258.61" r="2.1"/><circle cx="544.16" cy="264.99" r="2.1"/><circle cx="550.85" cy="272.58" r="2.1"/><circle cx="557.22" cy="279.57" r="2.1"/></g></symbol>
</defs></svg>
<div id="top" class="a"></div>
<div id="topline" class="a"></div>
<!-- tile 1 photo -->
<div class="tile" style="left:78px;width:178px;background:#3a3c40">
<svg class="a" style="left:2px;top:2px" width="172" height="96" viewBox="0 0 172 96">
<defs>
<filter id="b3" x="-30%" y="-30%" width="160%" height="160%"><feGaussianBlur stdDeviation="3"/></filter>
<filter id="b1" x="-30%" y="-30%" width="160%" height="160%"><feGaussianBlur stdDeviation="1.5"/></filter>
<linearGradient id="bg1" x1="0" y1="0" x2="1" y2="0"><stop offset="0" stop-color="#dcdad8"/><stop offset="0.5" stop-color="#e6e4e2"/><stop offset="1" stop-color="#e9e7e5"/></linearGradient>
</defs>
<rect width="172" height="96" fill="url(#bg1)"/>
<rect x="0" y="0" width="172" height="30" fill="#ebebe9" opacity="0.6" filter="url(#b3)"/>
<g filter="url(#b3)">
<rect x="90" y="45" width="25" height="40" fill="#bdbcba"/>
<rect x="120" y="70" width="50" height="26" fill="#c2c9d6"/>
<ellipse cx="140" cy="82" rx="16" ry="7" fill="#a99aa4"/>
<rect x="0" y="60" width="30" height="10" fill="#c8c8c6"/>
<ellipse cx="148" cy="20" rx="4" ry="8" fill="#b8b6b4"/>
</g>
<g filter="url(#b1)">
<path d="M28 96 L34 82 Q48 74 60 76 L98 74 Q116 78 128 96 Z" fill="#1d1d1f"/>
<path d="M83 74 L95 73 L97 96 L86 96 Z" fill="#ececec"/>
<path d="M52 68 L76 68 L78 82 L54 82 Z" fill="#caa08e"/>
<ellipse cx="33" cy="48" rx="4.5" ry="8" fill="#cfa08c"/>
<ellipse cx="93" cy="48" rx="4.5" ry="8" fill="#cfa08c"/>
<path d="M37 34 Q36 66 49 76 Q63 85 76 76 Q89 66 89 34 Z" fill="#d9b3a2"/>
<path d="M30 44 Q22 20 38 8 Q54 -2 72 2 Q94 6 98 26 L96 46 Q92 36 88 35 L84 30 L79 37 L73 30 L67 38 L60 31 L54 38 L47 32 L41 39 L36 36 L33 46 Z" fill="#353436"/>
<ellipse cx="50" cy="45" rx="4.5" ry="1.6" fill="#3b2b28"/>
<ellipse cx="76" cy="45" rx="4.5" ry="1.6" fill="#3b2b28"/>
<path d="M60 52 L58 62 Q62 64 66 62" stroke="#b88a76" stroke-width="1.2" fill="none"/>
<ellipse cx="63" cy="70" rx="6.5" ry="2" fill="#b98072"/>
</g>
</svg>
<div class="lbl" style="background:rgba(18,18,18,0.72);left:2px;top:76px;height:22px;line-height:22px;padding-left:20px;width:85px">心理部丁雪涵
<svg class="mic" width="14" height="15" viewBox="0 0 14 15"><rect x="4.8" y="1" width="4.4" height="8" rx="2.2" fill="#fff"/><path d="M3 6.5a4 4 0 0 0 8 0" stroke="#fff" stroke-width="1.2" fill="none"/><path d="M7 10.5V13.5M4.5 13.5h5" stroke="#fff" stroke-width="1.2"/><path d="M1.5 13.5L12.5 2" stroke="#e8403a" stroke-width="1.4"/></svg></div>
</div>
<!-- tile 2 photo -->
<div class="tile" style="left:264px;width:180px;border-color:#2b9a5f;background:#2a2c30">
<svg class="a" style="left:1px;top:1px" width="176" height="98" viewBox="0 0 176 98">
<defs>
<radialGradient id="bd" cx="0.5" cy="0.4" r="0.7"><stop offset="0" stop-color="#2c5a4b"/><stop offset="1" stop-color="#1b3b31"/></radialGradient>
<filter id="b2" x="-30%" y="-30%" width="160%" height="160%"><feGaussianBlur stdDeviation="0.9"/></filter>
</defs>
<rect width="176" height="98" fill="#2a2c30"/>
<rect x="1" y="0" width="174" height="97" fill="#b07a48"/>
<rect x="1.5" y="0.5" width="173" height="96" fill="none" stroke="#cf9a68" stroke-width="1.2"/>
<rect x="5.5" y="4.5" width="165" height="89.5" fill="url(#bd)"/>
<g filter="url(#b2)">
<rect x="140" y="70" width="3" height="26" fill="#c9a25a" transform="rotate(12 141 83)"/>
<rect x="144" y="66" width="3.5" height="28" fill="#dcdcd0"/>
<rect x="148" y="70" width="3.5" height="24" fill="#7a6662"/>
<rect x="152" y="72" width="2" height="22" fill="#c33"/>
<rect x="154" y="70" width="2.5" height="24" fill="#b8b090"/>
<rect x="156.5" y="71" width="2" height="23" fill="#3a78c8"/>
<rect x="158.5" y="70" width="3.5" height="24" fill="#e6b640"/>
<rect x="163" y="73" width="5" height="21" fill="#504a48"/>
<path d="M62 22 Q42 24 40 50 Q36 75 33 98 L112 98 Q104 72 100 50 Q96 24 80 22 Q70 20 62 22 Z" fill="#131313"/>
<path d="M50 45 Q49 27 70 26 Q91 27 91 45 Q91 68 81 77 Q72 83 61 78 Q50 70 50 45 Z" fill="#dcc2b5"/>
<path d="M40 52 Q44 26 66 23 Q54 32 52 48 L50 70 L46 86 Z" fill="#131313"/>
<path d="M101 52 Q97 26 74 23 Q86 32 89 48 L91 70 L96 86 Z" fill="#131313"/>
<circle cx="57.5" cy="56" r="8" fill="none" stroke="#bfa191" stroke-width="1.3"/>
<circle cx="82" cy="54.5" r="8" fill="none" stroke="#bfa191" stroke-width="1.3"/>
<path d="M65.5 55.5 Q70 53 74 54.5" stroke="#bfa191" stroke-width="1" fill="none"/>
<ellipse cx="71.5" cy="73.5" rx="6" ry="2.3" fill="#a83a2e"/>
</g>
</svg>
<div class="a" style="left:3px;top:77px;width:20px;height:20px;background:#f7841f"><svg width="20" height="20" viewBox="0 0 20 20"><circle cx="10" cy="7" r="3.3" fill="#fff"/><path d="M3.5 17Q4 11.5 10 11.5Q16 11.5 16.5 17Z" fill="#fff"/></svg></div>
<div class="lbl" style="left:23px;top:76px;height:22px;line-height:22px;background:rgba(30,30,30,0.8);padding-left:21px;width:59px">李春美
<svg class="mic" style="left:6px;top:4px" width="14" height="15" viewBox="0 0 14 15"><rect x="4.6" y="1" width="4.8" height="8.2" rx="2.4" fill="#fff"/><rect x="4.6" y="5" width="4.8" height="4.2" rx="1.5" fill="#3cc84a"/><path d="M2.8 6.5a4.2 4.2 0 0 0 8.4 0" stroke="#fff" stroke-width="1.3" fill="none"/><path d="M7 10.8V13.5M4.5 13.5h5" stroke="#fff" stroke-width="1.3"/></svg></div>
</div>
<div class="tile" style="left:451px;width:179px"><div class="av" style="left:64.0px;top:18px">家瑶</div><div class="lbl">27220403何家瑶<svg class="mic" width="14" height="15" viewBox="0 0 14 15"><rect x="4.8" y="1" width="4.4" height="8" rx="2.2" fill="#fff"/><path d="M3 6.5a4 4 0 0 0 8 0" stroke="#fff" stroke-width="1.2" fill="none"/><path d="M7 10.5V13.5M4.5 13.5h5" stroke="#fff" stroke-width="1.2"/><path d="M1.5 13.5L12.5 2" stroke="#e8403a" stroke-width="1.4"/></svg></div></div>
<div class="tile" style="left:638px;width:179px"><div class="av" style="left:64.0px;top:18px">佳盛</div><div class="lbl">27220424牛佳盛<svg class="mic" width="14" height="15" viewBox="0 0 14 15"><rect x="4.8" y="1" width="4.4" height="8" rx="2.2" fill="#fff"/><path d="M3 6.5a4 4 0 0 0 8 0" stroke="#fff" stroke-width="1.2" fill="none"/><path d="M7 10.5V13.5M4.5 13.5h5" stroke="#fff" stroke-width="1.2"/><path d="M1.5 13.5L12.5 2" stroke="#e8403a" stroke-width="1.4"/></svg></div></div>
<div class="tile" style="left:825px;width:179px"><div class="av" style="left:64.0px;top:18px">措姆</div><div class="lbl">多杰措姆<svg class="mic" width="14" height="15" viewBox="0 0 14 15"><rect x="4.8" y="1" width="4.4" height="8" rx="2.2" fill="#fff"/><path d="M3 6.5a4 4 0 0 0 8 0" stroke="#fff" stroke-width="1.2" fill="none"/><path d="M7 10.5V13.5M4.5 13.5h5" stroke="#fff" stroke-width="1.2"/><path d="M1.5 13.5L12.5 2" stroke="#e8403a" stroke-width="1.4"/></svg></div></div>
<div class="tile" style="left:1012px;width:179px"><div class="av" style="left:64.0px;top:18px">娜孜</div><div class="lbl">古力娜孜<svg class="mic" width="14" height="15" viewBox="0 0 14 15"><rect x="4.8" y="1" width="4.4" height="8" rx="2.2" fill="#fff"/><path d="M3 6.5a4 4 0 0 0 8 0" stroke="#fff" stroke-width="1.2" fill="none"/><path d="M7 10.5V13.5M4.5 13.5h5" stroke="#fff" stroke-width="1.2"/><path d="M1.5 13.5L12.5 2" stroke="#e8403a" stroke-width="1.4"/></svg></div></div>


<div id="ppt" class="a">
  <div id="title" class="a"><svg class="a" style="left:0;top:0" width="1065" height="45" viewBox="0 0 1065 45">
<g stroke="#a63f25" stroke-width="2" fill="none" opacity="0.9">
<path d="M725 10 H 840"/><circle cx="722" cy="10" r="3"/><circle cx="843" cy="10" r="3"/>
<path d="M750 22 H 880 L 900 40 H 1065"/><circle cx="747" cy="22" r="3"/>
<path d="M700 45 L 725 30 H 860 L 880 45"/>
<circle cx="735" cy="30" r="13"/><path d="M729 24 L741 36 M729 24 H736 M729 24 V31"/>
<path d="M900 0 Q 950 30 1000 20 Q 1040 10 1065 30"/>
<circle cx="940" cy="45" r="28"/><circle cx="940" cy="45" r="18"/>
<path d="M860 0 L 880 20"/>
</g>
<!-- save -->
<g transform="translate(15,7)">
<path d="M0.5 0.5H8L9.5 2V9.5H0.5Z" fill="none" stroke="#fff" stroke-width="1.1"/><rect x="2.3" y="0.5" width="5" height="3" fill="#fff"/><rect x="2.3" y="6" width="5.5" height="3.5" fill="#fff"/>
</g>
<!-- undo -->
<g transform="translate(34,6)" fill="none" stroke="#d9937f" stroke-width="1.1">
<path d="M2 4 H7 A3.5 3.5 0 0 1 7 11 H4"/><path d="M4.5 1.5 L2 4 L4.5 6.5"/><path d="M14 6l1.5 1.5 1.5-1.5" stroke-width="0.8"/>
</g>
<!-- redo -->
<g transform="translate(61,6)" fill="none" stroke="#d9937f" stroke-width="1.1">
<path d="M9 3.5 A4.5 4.5 0 1 0 10 7"/><path d="M6.5 1.5 L9.5 3.5 L7 6"/>
</g>
<!-- present -->
<g transform="translate(79,5)" fill="none" stroke="#fff" stroke-width="1">
<path d="M0.5 1.5H11.5"/><path d="M1.5 1.5V8.5H10.5V1.5"/><path d="M6 8.5V11 M3.5 12.5 L6 11 L8.5 12.5"/><circle cx="7.5" cy="5.5" r="2.3"/>
</g>
<circle cx="104" cy="12.5" r="1.3" fill="#fff"/>
<text x="532" y="15.5" font-size="8.7" fill="#fff" text-anchor="middle" font-family="Liberation Sans, sans-serif" xml:space="preserve">在线心灵沟通主题班会  -  PowerPoint</text>
<text x="866" y="14.5" font-size="9.5" fill="#fff" font-family="Liberation Sans, sans-serif">chunmei li</text>
<circle cx="927" cy="12" r="10" fill="#e8e3e1"/>
<text x="922" y="16" font-size="9" fill="#8a8a8a" font-family="Liberation Sans, sans-serif">CL</text>
<path d="M1045 30.5H1054.5V37.5H1049L1046.5 40V37.5H1045Z" fill="none" stroke="#fff" stroke-width="1"/>
</svg>
<div class="tab" style="left:10px;width:20px">文件</div>
<div class="a" style="left:43px;top:24px;width:31px;height:21px;background:#f3f3f3"></div>
<div class="tab" style="left:43px;width:31px;color:#b7472a">开始</div>
<div class="tab" style="left:78px;width:20px">插入</div>
<div class="tab" style="left:110px;width:20px">绘图</div>
<div class="tab" style="left:142px;width:20px">设计</div>
<div class="tab" style="left:174px;width:20px">切换</div>
<div class="tab" style="left:205px;width:20px">动画</div>
<div class="tab" style="left:234px;width:50px">幻灯片放映</div>
<div class="tab" style="left:293px;width:20px">录制</div>
<div class="tab" style="left:325px;width:20px">审阅</div>
<div class="tab" style="left:356px;width:20px">视图</div>
<div class="tab" style="left:387px;width:20px">帮助</div>
<svg class="a" style="left:423px;top:28px" width="12" height="14" viewBox="0 0 12 14"><path d="M3.5 9.5 Q1 7.5 1 5 A5 5 0 0 1 11 5 Q11 7.5 8.5 9.5 V11 H3.5Z M4.2 12.5H7.8" fill="none" stroke="#fff" stroke-width="1"/></svg>
<div class="tab" style="left:437px;width:60px">操作说明搜索</div>
</div>
  <div id="ribbon" class="a"><svg class="a" style="left:0;top:0" width="1065" height="64" viewBox="0 0 1065 64" font-family="Liberation Sans, sans-serif" font-size="8.4">
<g fill="#d5d5d5"><rect x="87.8" y="3" width="1" height="59"/><rect x="178.7" y="3" width="1" height="59"/><rect x="384" y="3" width="1" height="59"/><rect x="608.7" y="3" width="1" height="59"/><rect x="840.6" y="3" width="1" height="59"/><rect x="900" y="3" width="1" height="59"/></g>
<!-- clipboard -->
<rect x="12" y="7" width="16" height="18" rx="1" fill="#eec171"/>
<rect x="15" y="6" width="10" height="2.5" rx="1" fill="#666"/><circle cx="20" cy="5" r="1.6" fill="none" stroke="#666" stroke-width="1"/>
<path d="M23.5 15.5H29L32 18.5V26H23.5Z" fill="#fff" stroke="#555" stroke-width="0.8"/><path d="M29 15.5V18.5H32" fill="none" stroke="#555" stroke-width="0.7"/>
<text x="20" y="35.0" text-anchor="middle" fill="#262626">粘贴</text>
<path d="M18 42l2 2 2-2" stroke="#444" fill="none" stroke-width="0.9"/>
<g stroke="#b0b0b0" fill="none" stroke-width="1">
<circle cx="39" cy="13.5" r="2"/><circle cx="45" cy="13.5" r="2"/><path d="M40 11.5L45.5 5M44 11.5L38.5 5"/>
<rect x="37.5" y="21" width="5" height="7"/><rect x="40.5" y="24" width="5.5" height="7" fill="#f3f3f3"/>
<path d="M39 44.5L43.5 40" stroke-width="2.6" stroke="#c4c4c4"/><path d="M43 38.5l2 2" stroke-width="1.6" stroke="#b0b0b0"/>
</g>
<g fill="#a8a8a8"><text x="50.5" y="12.5">剪切</text><text x="50.5" y="28.5">复制</text><text x="50.5" y="44.5">格式刷</text></g>
<path d="M75.5 25.5l1.5 1.5 1.5-1.5" stroke="#b0b0b0" fill="none" stroke-width="0.8"/>
<text x="38.6" y="60.5" text-anchor="middle" fill="#444">剪贴板</text>
<path d="M80.5 55.5h5v5M83 58l2.5 2.5" stroke="#999" fill="none" stroke-width="0.7"/>
<!-- slides -->
<rect x="102.5" y="8" width="19" height="14.5" rx="1" fill="#fff" stroke="#777" stroke-width="0.9"/>
<rect x="105" y="11" width="14" height="3.5" fill="#c7c7c7"/><rect x="105" y="17" width="14" height="1" fill="#aaa"/>
<g stroke="#f0b030" stroke-width="0.9"><path d="M104.5 4v7M101 7.5h7M102 5l5 5M107 5l-5 5"/></g><circle cx="104.5" cy="7.5" r="1.8" fill="#f7d070"/>
<text x="111.5" y="35.0" text-anchor="middle" fill="#262626">新建</text>
<text x="95.3" y="45.5" fill="#262626" font-size="8.7">幻灯片</text>
<path d="M123.5 44.5l1.5 1.5 1.5-1.5" stroke="#444" fill="none" stroke-width="0.8"/>
<rect x="131.5" y="5.5" width="11" height="9" fill="#fff" stroke="#777" stroke-width="0.8"/><rect x="133" y="7.5" width="8" height="1.5" fill="#999"/><rect x="133" y="10.5" width="3.5" height="2.5" fill="#bbb"/><rect x="137.5" y="10.5" width="3.5" height="2.5" fill="#bbb"/>
<text x="145" y="12.0" fill="#262626">版式</text><path d="M165.5 10.5l1.5 1.5 1.5-1.5" stroke="#444" fill="none" stroke-width="0.8"/>
<rect x="133.5" y="21.5" width="9.5" height="9" fill="#fff" stroke="#777" stroke-width="0.8"/><path d="M131 24.5a3.5 3.5 0 0 1 6-2" stroke="#2a7ad0" fill="none" stroke-width="1.3"/><path d="M131 22v3h3" stroke="#2a7ad0" fill="none" stroke-width="1"/>
<text x="145" y="28.0" fill="#262626">重置</text>
<rect x="131.5" y="37" width="4" height="3" fill="#f0b030"/><rect x="134.5" y="40" width="8" height="8" fill="#fff" stroke="#777" stroke-width="0.8"/><path d="M135 43h7" stroke="#777" stroke-width="0.8"/>
<text x="145" y="44.0" fill="#262626">节</text><path d="M157.5 42.5l1.5 1.5 1.5-1.5" stroke="#444" fill="none" stroke-width="0.8"/>
<text x="133.6" y="60.5" text-anchor="middle" fill="#444">幻灯片</text>
<!-- font -->
<rect x="185.5" y="7.5" width="104" height="16" fill="#e6e6e6" stroke="#d6d6d6" stroke-width="1"/>
<rect x="279.5" y="7.5" width="10" height="16" fill="#e6e6e6" stroke="#d6d6d6" stroke-width="1"/>
<rect x="291.5" y="7.5" width="34" height="16" fill="#e6e6e6" stroke="#d6d6d6" stroke-width="1"/>
<rect x="315.5" y="7.5" width="10" height="16" fill="#e6e6e6" stroke="#d6d6d6" stroke-width="1"/>
<g stroke="#aaa" fill="none" stroke-width="0.7"><path d="M283.5 15l1 1 1-1M319.5 15l1 1 1-1"/></g>
<g fill="#a8a8a8" font-size="11">
<text x="330" y="18.0">A</text><text x="347" y="18.0">A</text>
<text x="189" y="39.0" font-size="10" font-weight="bold">B</text>
<text x="206" y="39.0" font-size="10" font-style="italic">I</text>
<text x="222" y="39.0" font-size="10">U</text>
<text x="239" y="39.0" font-size="10" font-weight="bold">S</text>
<text x="253" y="39.0" font-size="7.5">abc</text>
<text x="271" y="38.0" font-size="8.5">AV</text>
<text x="297" y="39.0" font-size="9">Aa</text>
<text x="355" y="39.0" font-size="11">A</text>
</g>
<g stroke="#a8a8a8" fill="none" stroke-width="0.8">
<path d="M337 10.5l1.5-1.5 1.5 1.5M354 9l1.5 1.5 1.5-1.5"/>
<path d="M222 42.5h8M253 37.5h11M271 42.5h10M272 41.5l-1 1 1 1M280 41.5l1 1-1 1"/>
<path d="M286.5 37.5l1 1 1-1M313 37.5l1 1 1-1M345.5 37.5l1 1 1-1M372.5 37.5l1 1 1-1"/>
</g>
<rect x="361" y="8" width="1" height="16" fill="#d6d6d6"/>
<rect x="323" y="28" width="1" height="18" fill="#d6d6d6"/>
<g transform="translate(367,10)" stroke="#aaa" fill="#ccc" stroke-width="0.8"><path d="M2 9l5-5 4 4-5 5z"/><text x="0" y="4.5" font-size="7" fill="#aaa" stroke="none">A</text></g>
<g transform="translate(328,32)"><text x="0" y="4.5" font-size="6.5" fill="#aaa">ab</text><path d="M2 9l6-6 2 2-6 6z" fill="#aaa"/><rect x="0" y="10" width="11" height="2" fill="#ddd"/></g>
<text x="276.6" y="60.5" text-anchor="middle" fill="#444">字体</text>
<path d="M376.5 55.5h5v5M379 58l2.5 2.5" stroke="#999" fill="none" stroke-width="0.7"/>
<!-- paragraph -->
<g stroke="#b0b0b0" stroke-width="1" fill="none">
<path d="M396 11h7M396 15h7M396 19h7M393 11h1.5M393 15h1.5M393 19h1.5"/>
<path d="M409.5 14l1.5 1.5 1.5-1.5"/>
<path d="M423 11h7M423 15h7M423 19h7M420 11h1.5M420 15h1.5M420 19h1.5"/>
<path d="M436.5 14l1.5 1.5 1.5-1.5"/>
<path d="M451 10h10M455 13h6M455 16h6M451 19h10M454 12.5l-3 2 3 2"/>
<path d="M468 10h10M472 13h6M472 16h6M468 19h10M468 12.5l3 2-3 2"/>
<path d="M493 11h6M493 15h6M493 19h6M490 10v10M488.5 11.5l1.5-1.5 1.5 1.5M488.5 18.5l1.5 1.5 1.5-1.5"/>
<path d="M502.5 14l1.5 1.5 1.5-1.5"/>
<path d="M394 33h8M394 36h6M394 39h8"/>
<path d="M410 33h8M411 36h6M410 39h8"/>
<path d="M426 33h8M428 36h6M426 39h8"/>
<path d="M443 33h9M443 36h9M443 39h9"/>
<path d="M460 32v9M470 32v9M462 33h6M462 36h6M462 39h6"/>
<path d="M480 34h11M480 38h11"/>
<path d="M494.5 36l1.5 1.5 1.5-1.5"/>
<path d="M514 5v10M518 5v10M522 5v10M520.5 7.5l1.5-1.5 1.5 1.5"/>
<rect x="513.5" y="21" width="10" height="10"/><path d="M518.5 22v8M517 23.5l1.5-1.5 1.5 1.5M517 28.5l1.5 1.5 1.5-1.5"/>
<path d="M512 38h10M514 38v6M516 41h9v5h-9z"/>
<path d="M561.5 10.5l1.5 1.5 1.5-1.5M567.5 26.5l1.5 1.5 1.5-1.5M592.5 42.5l1.5 1.5 1.5-1.5"/>
</g>
<g fill="#d6d6d6"><rect x="445.5" y="8" width="1" height="14"/><rect x="483" y="8" width="1" height="14"/><rect x="475" y="29" width="1" height="14"/></g>
<g fill="#a8a8a8"><text x="527" y="12.0">文字方向</text><text x="527" y="28.0">对齐文本</text><text x="527" y="44.0">转换为 SmartArt</text></g>
<text x="490.5" y="60.5" text-anchor="middle" fill="#444">段落</text>
<path d="M600.5 55.5h5v5M603 58l2.5 2.5" stroke="#999" fill="none" stroke-width="0.7"/>
<!-- drawing gallery -->
<rect x="614.5" y="4" width="92" height="43" fill="#fff" stroke="#dadada" stroke-width="1"/>
<rect x="696.3" y="4.5" width="10" height="14" fill="#e8e8e8"/>
<path d="M696 18.5h10M696 32.5h10M696 4v43" stroke="#dadada" stroke-width="1"/>
<path d="M699.5 25l1.5 1.5 1.5-1.5M699.5 38l1.5 1.5 1.5-1.5M699.5 41.5h3" stroke="#555" fill="none" stroke-width="0.9"/>
<g stroke="#444" stroke-width="0.9" fill="none">
<rect x="617.5" y="7.5" width="9" height="8"/><path d="M619 10h3M619 13h6" stroke="#2a7ad0"/>
<rect x="630.5" y="7.5" width="9" height="8"/><path d="M634 10h3" stroke="#2a7ad0"/>
<path d="M643 7l9 9M656 7l9 9M663 15l2 1-1-2"/>
<rect x="669.5" y="8.5" width="10" height="7"/><ellipse cx="688" cy="12" rx="5" ry="4"/>
<rect x="617.5" y="21.5" width="9" height="8" rx="2"/><path d="M630.5 29.5l4.5-8 4.5 8z"/>
<path d="M644 21h5v8h4M657 21h5v8h4"/><path d="M670 23h5v-2l4 4-4 4v-2h-5z"/><path d="M685 21h4v4h2.5l-4.5 4.5-4.5-4.5h2.5z"/>
<path d="M618 35h5a4 4 0 0 1 4 4v5h-9z"/><path d="M632 35l3 3-2 2 3 3-1 2"/><path d="M644 36q6 0 8 8M657 44q2-8 4-8q2 0 4 8"/>
<path d="M672 35q-2 0-2 2v2l-1 1 1 1v2q0 2 2 2M687 35q2 0 2 2v2l1 1-1 1v2q0 2-2 2"/>
</g>
<rect x="713.5" y="6" width="9" height="9" fill="#fff" stroke="#555" stroke-width="0.9"/>
<rect x="718.5" y="10.5" width="9" height="9" fill="#eec171"/>
<rect x="723.5" y="15" width="9" height="9" fill="#fff" stroke="#555" stroke-width="0.9"/>
<text x="722.8" y="34.5" text-anchor="middle" fill="#262626">排列</text>
<path d="M721 42l1.8 1.8 1.8-1.8" stroke="#444" fill="none" stroke-width="0.9"/>
<rect x="746.5" y="5" width="19" height="19" rx="3" fill="#f2eef2" stroke="#ccc" stroke-width="0.9"/>
<path d="M760 22l7-9" stroke="#aaa" stroke-width="2.5"/>
<text x="755.7" y="34.5" text-anchor="middle" fill="#a8a8a8">快速样式</text>
<path d="M754 42l1.8 1.8 1.8-1.8" stroke="#aaa" fill="none" stroke-width="0.8"/>
<g stroke="#b0b0b0" fill="none" stroke-width="0.9"><path d="M779 8l4-3 4 4-4 4z"/><path d="M778 27l7-7M778.5 20.5h5M778.5 20.5v7h7v-4"/><circle cx="783" cy="41" r="4" fill="#ddd"/></g>
<g fill="#a8a8a8"><text x="789" y="11.5">形状填充</text><text x="789" y="27.5">形状轮廓</text><text x="789" y="44.0">形状效果</text></g>
<path d="M826.5 10.5l1.5 1.5 1.5-1.5M826.5 26.5l1.5 1.5 1.5-1.5M826.5 42.5l1.5 1.5 1.5-1.5" stroke="#b0b0b0" fill="none" stroke-width="0.8"/>
<text x="718.8" y="60.5" text-anchor="middle" fill="#444">绘图</text>
<path d="M832.5 55.5h5v5M835 58l2.5 2.5" stroke="#999" fill="none" stroke-width="0.7"/>
<!-- editing -->
<circle cx="856" cy="9" r="3.5" fill="none" stroke="#2a6fc0" stroke-width="1.3"/><path d="M853.5 11.5l-4 4" stroke="#2a6fc0" stroke-width="1.5"/>
<text x="862" y="12.0" fill="#262626">查找</text>
<text x="849" y="23.0" font-size="5.5" fill="#2a6fc0">ab</text><text x="852" y="28.5" font-size="5.5" fill="#2a6fc0">ac</text>
<text x="862" y="28.0" fill="#262626">替换</text><path d="M887.5 26.5l1.5 1.5 1.5-1.5" stroke="#444" fill="none" stroke-width="0.8"/>
<path d="M851.5 37v9l2.5-2 2 3.5 1.3-.7-2-3.4h3z" fill="#fff" stroke="#444" stroke-width="0.8"/>
<text x="862" y="44.0" fill="#262626">选择</text><path d="M882.5 42.5l1.5 1.5 1.5-1.5" stroke="#444" fill="none" stroke-width="0.8"/>
<text x="870" y="60.5" text-anchor="middle" fill="#444">编辑</text>
<path d="M1049 61l5-4.5 5 4.5" stroke="#555" fill="none" stroke-width="1"/>
</svg>
</div>
  <div class="a" style="left:168px;top:109px;width:1px;height:441px;background:#d2d2d2"></div>
<div class="a" style="left:155.5px;top:111.5px;width:10px;height:438px;background:#dcdcdc"></div>
<div class="a" style="left:155.5px;top:111.5px;width:10px;height:9px;background:#fff"><svg width="10" height="9"><path d="M2.5 6h5l-2.5-3z" fill="#555"/></svg></div>
<div class="a" style="left:155.5px;top:173.5px;width:10px;height:143px;background:#fff;box-shadow:0 0 0 0.5px #ccc"></div>
<div class="a" style="left:155.5px;top:539.5px;width:10px;height:9px;background:#fff"><svg width="10" height="9"><path d="M2.5 3h5l-2.5 3z" fill="#555"/></svg></div>
<div class="thumb" style="top:123px"><svg width="113" height="64" viewBox="0 0 682 383" preserveAspectRatio="none"><use href="#base"/><polygon points="114,36 250,64 242,143 206,143 88,122 107,44" fill="#169ace" opacity="0.3"/><use href="#extra"/><text x="269.8" y="179.7" font-size="47" fill="#000" font-family="Liberation Sans, sans-serif">Part 1</text><text x="345" y="225" font-size="31" fill="#222" text-anchor="middle" font-weight="bold" font-family="Liberation Sans, sans-serif">压力时钟</text><rect x="56.75" y="29.75" width="562" height="330" rx="51" fill="none" stroke="#333" stroke-width="5"/></svg></div>
<div class="tn" style="top:120px;color:#444">3</div>
<div class="star" style="top:132px">★</div>
<div class="thumb" style="top:202px"><svg width="113" height="64" viewBox="0 0 682 383" preserveAspectRatio="none"><use href="#base"/><text x="138" y="112" font-size="30" font-weight="bold" fill="#111" font-family="Liberation Sans, sans-serif">情绪时钟</text><rect x="138" y="159" width="255" height="7" fill="#b5b5b5"/><rect x="138" y="186" width="200" height="7" fill="#b5b5b5"/><rect x="138" y="236" width="255" height="7" fill="#b5b5b5"/><rect x="138" y="262" width="255" height="7" fill="#b5b5b5"/><circle cx="478" cy="124" r="64" fill="none" stroke="#8fd0f5" stroke-width="7" stroke-dasharray="4 3"/><circle cx="478" cy="124" r="54" fill="#4ab6ee"/><circle cx="478" cy="124" r="16" fill="none" stroke="#a8dcf8" stroke-width="4"/><circle cx="527" cy="212" r="46" fill="none" stroke="#f6b8c4" stroke-width="6" stroke-dasharray="4 3"/><circle cx="527" cy="212" r="38" fill="#f07c98"/><circle cx="527" cy="212" r="12" fill="none" stroke="#f9bccb" stroke-width="4"/><circle cx="478" cy="284" r="48" fill="none" stroke="#bbb" stroke-width="7" stroke-dasharray="4 3"/><circle cx="478" cy="284" r="38" fill="#aaa"/><circle cx="478" cy="284" r="12" fill="none" stroke="#ccc" stroke-width="4"/><rect x="56.75" y="29.75" width="562" height="330" rx="51" fill="none" stroke="#333" stroke-width="5"/></svg></div>
<div class="tn" style="top:199px;color:#444">4</div>
<div class="star" style="top:211px">★</div>
<div class="thumb" style="top:281px"><svg width="113" height="64" viewBox="0 0 682 383" preserveAspectRatio="none"><use href="#base"/><polygon points="114,36 250,64 242,143 206,143 88,122 107,44" fill="#169ace" opacity="0.3"/><use href="#extra"/><text x="269.8" y="179.7" font-size="47" fill="#000" font-family="Liberation Sans, sans-serif">Part 2</text><text x="345" y="225" font-size="31" fill="#222" text-anchor="middle" font-weight="bold" font-family="Liberation Sans, sans-serif">情绪变形记</text><rect x="56.75" y="29.75" width="562" height="330" rx="51" fill="none" stroke="#333" stroke-width="5"/></svg></div>
<div class="tn" style="top:278px;color:#444">5</div>
<div class="star" style="top:290px">★</div>
<div class="thumb" style="top:360px"><svg width="113" height="64" viewBox="0 0 682 383" preserveAspectRatio="none"><use href="#base"/><text x="332" y="92" font-size="30" font-weight="bold" fill="#111" text-anchor="middle" font-family="Liberation Sans, sans-serif">情绪变通的</text><circle cx="182" cy="137" r="30" fill="#f4a7b1"/><rect x="235" y="125" width="295" height="7" fill="#b5b5b5"/><rect x="235" y="150" width="200" height="7" fill="#b5b5b5"/><circle cx="182" cy="214" r="30" fill="#d8ea3c"/><rect x="235" y="202" width="295" height="7" fill="#b5b5b5"/><rect x="235" y="227" width="200" height="7" fill="#b5b5b5"/><circle cx="182" cy="289" r="30" fill="#5bbdf5"/><rect x="235" y="277" width="295" height="7" fill="#b5b5b5"/><rect x="235" y="302" width="200" height="7" fill="#b5b5b5"/><rect x="56.75" y="29.75" width="562" height="330" rx="51" fill="none" stroke="#333" stroke-width="5"/></svg></div>
<div class="tn" style="top:357px;color:#444">6</div>
<div class="star" style="top:369px">★</div>
<div class="a" style="left:24px;top:437px;width:117px;height:68px;border:2px solid #c0462a"></div>
<div class="thumb" style="top:439px"><svg width="113" height="64" viewBox="0 0 682 383" preserveAspectRatio="none"><use href="#base"/><polygon points="114,36 250,64 242,143 206,143 88,122 107,44" fill="#169ace" opacity="0.3"/><use href="#extra"/><text x="269.8" y="179.7" font-size="47" fill="#000" font-family="Liberation Sans, sans-serif">Part 3</text><text x="345" y="225" font-size="31" fill="#222" text-anchor="middle" font-weight="bold" font-family="Liberation Sans, sans-serif">不烦躁的理由</text><rect x="56.75" y="29.75" width="562" height="330" rx="51" fill="none" stroke="#333" stroke-width="5"/></svg></div>
<div class="tn" style="top:436px;color:#c43e1c">7</div>
<div class="star" style="top:448px">★</div>
<div class="thumb" style="top:518px"><svg width="113" height="64" viewBox="0 0 682 383" preserveAspectRatio="none"><use href="#base"/><text x="332" y="86" font-size="30" font-weight="bold" fill="#111" text-anchor="middle" font-family="Liberation Sans, sans-serif">不烦躁的理由</text><circle cx="170" cy="140" r="26" fill="#f4a7b1"/><path d="M205 110 H520 L535 140 L520 170 H205 Z" fill="none" stroke="#9fd6f2" stroke-width="2"/><rect x="225" y="122" width="270" height="6" fill="#b5b5b5"/><rect x="225" y="137" width="270" height="6" fill="#b5b5b5"/><rect x="225" y="152" width="150" height="6" fill="#b5b5b5"/><rect x="56.75" y="29.75" width="562" height="330" rx="51" fill="none" stroke="#333" stroke-width="5"/></svg></div>
<div class="tn" style="top:515px;color:#444">8</div>
<div class="star" style="top:527px">★</div>
<svg class="a" style="left:172px;top:135px" width="10" height="380" viewBox="0 0 10 380" font-family="Liberation Sans, sans-serif"><rect width="10" height="380" fill="#fff"/><text x="0" y="0" transform="translate(7.2,10.8) rotate(-90)" text-anchor="middle" font-size="8.5" fill="#555">9</text><text x="0" y="0" transform="translate(7.2,30.8) rotate(-90)" text-anchor="middle" font-size="8.5" fill="#555">8</text><text x="0" y="0" transform="translate(7.2,50.8) rotate(-90)" text-anchor="middle" font-size="8.5" fill="#555">7</text><text x="0" y="0" transform="translate(7.2,70.8) rotate(-90)" text-anchor="middle" font-size="8.5" fill="#555">6</text><text x="0" y="0" transform="translate(7.2,90.8) rotate(-90)" text-anchor="middle" font-size="8.5" fill="#555">5</text><text x="0" y="0" transform="translate(7.2,110.8) rotate(-90)" text-anchor="middle" font-size="8.5" fill="#555">4</text><text x="0" y="0" transform="translate(7.2,130.8) rotate(-90)" text-anchor="middle" font-size="8.5" fill="#555">3</text><text x="0" y="0" transform="translate(7.2,150.8) rotate(-90)" text-anchor="middle" font-size="8.5" fill="#555">2</text><text x="0" y="0" transform="translate(7.2,170.8) rotate(-90)" text-anchor="middle" font-size="8.5" fill="#555">1</text><text x="0" y="0" transform="translate(7.2,190.8) rotate(-90)" text-anchor="middle" font-size="8.5" fill="#555">0</text><text x="0" y="0" transform="translate(7.2,210.8) rotate(-90)" text-anchor="middle" font-size="8.5" fill="#555">1</text><text x="0" y="0" transform="translate(7.2,230.8) rotate(-90)" text-anchor="middle" font-size="8.5" fill="#555">2</text><text x="0" y="0" transform="translate(7.2,250.8) rotate(-90)" text-anchor="middle" font-size="8.5" fill="#555">3</text><text x="0" y="0" transform="translate(7.2,270.8) rotate(-90)" text-anchor="middle" font-size="8.5" fill="#555">4</text><text x="0" y="0" transform="translate(7.2,290.8) rotate(-90)" text-anchor="middle" font-size="8.5" fill="#555">5</text><text x="0" y="0" transform="translate(7.2,310.8) rotate(-90)" text-anchor="middle" font-size="8.5" fill="#555">6</text><text x="0" y="0" transform="translate(7.2,330.8) rotate(-90)" text-anchor="middle" font-size="8.5" fill="#555">7</text><text x="0" y="0" transform="translate(7.2,350.8) rotate(-90)" text-anchor="middle" font-size="8.5" fill="#555">8</text><text x="0" y="0" transform="translate(7.2,370.8) rotate(-90)" text-anchor="middle" font-size="8.5" fill="#555">9</text><rect x="4.3" y="5.3" width="1" height="1" fill="#888"/><rect x="4.3" y="15.3" width="1" height="1" fill="#888"/><rect x="3.3" y="20.3" width="3" height="1" fill="#777"/><rect x="4.3" y="25.3" width="1" height="1" fill="#888"/><rect x="4.3" y="35.3" width="1" height="1" fill="#888"/><rect x="3.3" y="40.3" width="3" height="1" fill="#777"/><rect x="4.3" y="45.3" width="1" height="1" fill="#888"/><rect x="4.3" y="55.3" width="1" height="1" fill="#888"/><rect x="3.3" y="60.3" width="3" height="1" fill="#777"/><rect x="4.3" y="65.3" width="1" height="1" fill="#888"/><rect x="4.3" y="75.3" width="1" height="1" fill="#888"/><rect x="3.3" y="80.3" width="3" height="1" fill="#777"/><rect x="4.3" y="85.3" width="1" height="1" fill="#888"/><rect x="4.3" y="95.3" width="1" height="1" fill="#888"/><rect x="3.3" y="100.3" width="3" height="1" fill="#777"/><rect x="4.3" y="105.3" width="1" height="1" fill="#888"/><rect x="4.3" y="115.3" width="1" height="1" fill="#888"/><rect x="3.3" y="120.3" width="3" height="1" fill="#777"/><rect x="4.3" y="125.3" width="1" height="1" fill="#888"/><rect x="4.3" y="135.3" width="1" height="1" fill="#888"/><rect x="3.3" y="140.3" width="3" height="1" fill="#777"/><rect x="4.3" y="145.3" width="1" height="1" fill="#888"/><rect x="4.3" y="155.3" width="1" height="1" fill="#888"/><rect x="3.3" y="160.3" width="3" height="1" fill="#777"/><rect x="4.3" y="165.3" width="1" height="1" fill="#888"/><rect x="4.3" y="175.3" width="1" height="1" fill="#888"/><rect x="3.3" y="180.3" width="3" height="1" fill="#777"/><rect x="4.3" y="185.3" width="1" height="1" fill="#888"/><rect x="4.3" y="195.3" width="1" height="1" fill="#888"/><rect x="3.3" y="200.3" width="3" height="1" fill="#777"/><rect x="4.3" y="205.3" width="1" height="1" fill="#888"/><rect x="4.3" y="215.3" width="1" height="1" fill="#888"/><rect x="3.3" y="220.3" width="3" height="1" fill="#777"/><rect x="4.3" y="225.3" width="1" height="1" fill="#888"/><rect x="4.3" y="235.3" width="1" height="1" fill="#888"/><rect x="3.3" y="240.3" width="3" height="1" fill="#777"/><rect x="4.3" y="245.3" width="1" height="1" fill="#888"/><rect x="4.3" y="255.3" width="1" height="1" fill="#888"/><rect x="3.3" y="260.3" width="3" height="1" fill="#777"/><rect x="4.3" y="265.3" width="1" height="1" fill="#888"/><rect x="4.3" y="275.3" width="1" height="1" fill="#888"/><rect x="3.3" y="280.3" width="3" height="1" fill="#777"/><rect x="4.3" y="285.3" width="1" height="1" fill="#888"/><rect x="4.3" y="295.3" width="1" height="1" fill="#888"/><rect x="3.3" y="300.3" width="3" height="1" fill="#777"/><rect x="4.3" y="305.3" width="1" height="1" fill="#888"/><rect x="4.3" y="315.3" width="1" height="1" fill="#888"/><rect x="3.3" y="320.3" width="3" height="1" fill="#777"/><rect x="4.3" y="325.3" width="1" height="1" fill="#888"/><rect x="4.3" y="335.3" width="1" height="1" fill="#888"/><rect x="3.3" y="340.3" width="3" height="1" fill="#777"/><rect x="4.3" y="345.3" width="1" height="1" fill="#888"/><rect x="4.3" y="355.3" width="1" height="1" fill="#888"/><rect x="3.3" y="360.3" width="3" height="1" fill="#777"/><rect x="4.3" y="365.3" width="1" height="1" fill="#888"/><rect x="4.3" y="375.3" width="1" height="1" fill="#888"/></svg>
<svg class="a" style="left:281px;top:113px" width="679" height="9" viewBox="0 0 679 9" font-family="Liberation Sans, sans-serif"><rect width="679" height="9" fill="#fff"/><text x="18.5" y="7.8" text-anchor="middle" font-size="8.5" fill="#555">16</text><text x="38.5" y="7.8" text-anchor="middle" font-size="8.5" fill="#555">15</text><text x="58.5" y="7.8" text-anchor="middle" font-size="8.5" fill="#555">14</text><text x="78.5" y="7.8" text-anchor="middle" font-size="8.5" fill="#555">13</text><text x="98.5" y="7.8" text-anchor="middle" font-size="8.5" fill="#555">12</text><text x="118.5" y="7.8" text-anchor="middle" font-size="8.5" fill="#555">11</text><text x="138.5" y="7.8" text-anchor="middle" font-size="8.5" fill="#555">10</text><text x="158.5" y="7.8" text-anchor="middle" font-size="8.5" fill="#555">9</text><text x="178.5" y="7.8" text-anchor="middle" font-size="8.5" fill="#555">8</text><text x="198.5" y="7.8" text-anchor="middle" font-size="8.5" fill="#555">7</text><text x="218.5" y="7.8" text-anchor="middle" font-size="8.5" fill="#555">6</text><text x="238.5" y="7.8" text-anchor="middle" font-size="8.5" fill="#555">5</text><text x="258.5" y="7.8" text-anchor="middle" font-size="8.5" fill="#555">4</text><text x="278.5" y="7.8" text-anchor="middle" font-size="8.5" fill="#555">3</text><text x="298.5" y="7.8" text-anchor="middle" font-size="8.5" fill="#555">2</text><text x="318.5" y="7.8" text-anchor="middle" font-size="8.5" fill="#555">1</text><text x="338.5" y="7.8" text-anchor="middle" font-size="8.5" fill="#555">0</text><text x="358.5" y="7.8" text-anchor="middle" font-size="8.5" fill="#555">1</text><text x="378.5" y="7.8" text-anchor="middle" font-size="8.5" fill="#555">2</text><text x="398.5" y="7.8" text-anchor="middle" font-size="8.5" fill="#555">3</text><text x="418.5" y="7.8" text-anchor="middle" font-size="8.5" fill="#555">4</text><text x="438.5" y="7.8" text-anchor="middle" font-size="8.5" fill="#555">5</text><text x="458.5" y="7.8" text-anchor="middle" font-size="8.5" fill="#555">6</text><text x="478.5" y="7.8" text-anchor="middle" font-size="8.5" fill="#555">7</text><text x="498.5" y="7.8" text-anchor="middle" font-size="8.5" fill="#555">8</text><text x="518.5" y="7.8" text-anchor="middle" font-size="8.5" fill="#555">9</text><text x="538.5" y="7.8" text-anchor="middle" font-size="8.5" fill="#555">10</text><text x="558.5" y="7.8" text-anchor="middle" font-size="8.5" fill="#555">11</text><text x="578.5" y="7.8" text-anchor="middle" font-size="8.5" fill="#555">12</text><text x="598.5" y="7.8" text-anchor="middle" font-size="8.5" fill="#555">13</text><text x="618.5" y="7.8" text-anchor="middle" font-size="8.5" fill="#555">14</text><text x="638.5" y="7.8" text-anchor="middle" font-size="8.5" fill="#555">15</text><text x="658.5" y="7.8" text-anchor="middle" font-size="8.5" fill="#555">16</text><rect x="3.0" y="4" width="1" height="1" fill="#888"/><rect x="8.0" y="3" width="1" height="3" fill="#777"/><rect x="13.0" y="4" width="1" height="1" fill="#888"/><rect x="23.0" y="4" width="1" height="1" fill="#888"/><rect x="28.0" y="3" width="1" height="3" fill="#777"/><rect x="33.0" y="4" width="1" height="1" fill="#888"/><rect x="43.0" y="4" width="1" height="1" fill="#888"/><rect x="48.0" y="3" width="1" height="3" fill="#777"/><rect x="53.0" y="4" width="1" height="1" fill="#888"/><rect x="63.0" y="4" width="1" height="1" fill="#888"/><rect x="68.0" y="3" width="1" height="3" fill="#777"/><rect x="73.0" y="4" width="1" height="1" fill="#888"/><rect x="83.0" y="4" width="1" height="1" fill="#888"/><rect x="88.0" y="3" width="1" height="3" fill="#777"/><rect x="93.0" y="4" width="1" height="1" fill="#888"/><rect x="103.0" y="4" width="1" height="1" fill="#888"/><rect x="108.0" y="3" width="1" height="3" fill="#777"/><rect x="113.0" y="4" width="1" height="1" fill="#888"/><rect x="123.0" y="4" width="1" height="1" fill="#888"/><rect x="128.0" y="3" width="1" height="3" fill="#777"/><rect x="133.0" y="4" width="1" height="1" fill="#888"/><rect x="143.0" y="4" width="1" height="1" fill="#888"/><rect x="148.0" y="3" width="1" height="3" fill="#777"/><rect x="153.0" y="4" width="1" height="1" fill="#888"/><rect x="163.0" y="4" width="1" height="1" fill="#888"/><rect x="168.0" y="3" width="1" height="3" fill="#777"/><rect x="173.0" y="4" width="1" height="1" fill="#888"/><rect x="183.0" y="4" width="1" height="1" fill="#888"/><rect x="188.0" y="3" width="1" height="3" fill="#777"/><rect x="193.0" y="4" width="1" height="1" fill="#888"/><rect x="203.0" y="4" width="1" height="1" fill="#888"/><rect x="208.0" y="3" width="1" height="3" fill="#777"/><rect x="213.0" y="4" width="1" height="1" fill="#888"/><rect x="223.0" y="4" width="1" height="1" fill="#888"/><rect x="228.0" y="3" width="1" height="3" fill="#777"/><rect x="233.0" y="4" width="1" height="1" fill="#888"/><rect x="243.0" y="4" width="1" height="1" fill="#888"/><rect x="248.0" y="3" width="1" height="3" fill="#777"/><rect x="253.0" y="4" width="1" height="1" fill="#888"/><rect x="263.0" y="4" width="1" height="1" fill="#888"/><rect x="268.0" y="3" width="1" height="3" fill="#777"/><rect x="273.0" y="4" width="1" height="1" fill="#888"/><rect x="283.0" y="4" width="1" height="1" fill="#888"/><rect x="288.0" y="3" width="1" height="3" fill="#777"/><rect x="293.0" y="4" width="1" height="1" fill="#888"/><rect x="303.0" y="4" width="1" height="1" fill="#888"/><rect x="308.0" y="3" width="1" height="3" fill="#777"/><rect x="313.0" y="4" width="1" height="1" fill="#888"/><rect x="323.0" y="4" width="1" height="1" fill="#888"/><rect x="328.0" y="3" width="1" height="3" fill="#777"/><rect x="333.0" y="4" width="1" height="1" fill="#888"/><rect x="343.0" y="4" width="1" height="1" fill="#888"/><rect x="348.0" y="3" width="1" height="3" fill="#777"/><rect x="353.0" y="4" width="1" height="1" fill="#888"/><rect x="363.0" y="4" width="1" height="1" fill="#888"/><rect x="368.0" y="3" width="1" height="3" fill="#777"/><rect x="373.0" y="4" width="1" height="1" fill="#888"/><rect x="383.0" y="4" width="1" height="1" fill="#888"/><rect x="388.0" y="3" width="1" height="3" fill="#777"/><rect x="393.0" y="4" width="1" height="1" fill="#888"/><rect x="403.0" y="4" width="1" height="1" fill="#888"/><rect x="408.0" y="3" width="1" height="3" fill="#777"/><rect x="413.0" y="4" width="1" height="1" fill="#888"/><rect x="423.0" y="4" width="1" height="1" fill="#888"/><rect x="428.0" y="3" width="1" height="3" fill="#777"/><rect x="433.0" y="4" width="1" height="1" fill="#888"/><rect x="443.0" y="4" width="1" height="1" fill="#888"/><rect x="448.0" y="3" width="1" height="3" fill="#777"/><rect x="453.0" y="4" width="1" height="1" fill="#888"/><rect x="463.0" y="4" width="1" height="1" fill="#888"/><rect x="468.0" y="3" width="1" height="3" fill="#777"/><rect x="473.0" y="4" width="1" height="1" fill="#888"/><rect x="483.0" y="4" width="1" height="1" fill="#888"/><rect x="488.0" y="3" width="1" height="3" fill="#777"/><rect x="493.0" y="4" width="1" height="1" fill="#888"/><rect x="503.0" y="4" width="1" height="1" fill="#888"/><rect x="508.0" y="3" width="1" height="3" fill="#777"/><rect x="513.0" y="4" width="1" height="1" fill="#888"/><rect x="523.0" y="4" width="1" height="1" fill="#888"/><rect x="528.0" y="3" width="1" height="3" fill="#777"/><rect x="533.0" y="4" width="1" height="1" fill="#888"/><rect x="543.0" y="4" width="1" height="1" fill="#888"/><rect x="548.0" y="3" width="1" height="3" fill="#777"/><rect x="553.0" y="4" width="1" height="1" fill="#888"/><rect x="563.0" y="4" width="1" height="1" fill="#888"/><rect x="568.0" y="3" width="1" height="3" fill="#777"/><rect x="573.0" y="4" width="1" height="1" fill="#888"/><rect x="583.0" y="4" width="1" height="1" fill="#888"/><rect x="588.0" y="3" width="1" height="3" fill="#777"/><rect x="593.0" y="4" width="1" height="1" fill="#888"/><rect x="603.0" y="4" width="1" height="1" fill="#888"/><rect x="608.0" y="3" width="1" height="3" fill="#777"/><rect x="613.0" y="4" width="1" height="1" fill="#888"/><rect x="623.0" y="4" width="1" height="1" fill="#888"/><rect x="628.0" y="3" width="1" height="3" fill="#777"/><rect x="633.0" y="4" width="1" height="1" fill="#888"/><rect x="643.0" y="4" width="1" height="1" fill="#888"/><rect x="648.0" y="3" width="1" height="3" fill="#777"/><rect x="653.0" y="4" width="1" height="1" fill="#888"/><rect x="663.0" y="4" width="1" height="1" fill="#888"/><rect x="668.0" y="3" width="1" height="3" fill="#777"/><rect x="673.0" y="4" width="1" height="1" fill="#888"/></svg>
<div class="a" style="left:638px;top:113px;width:1px;height:9px;background:repeating-linear-gradient(#d06a50 0 1px,transparent 1px 2px)"></div>
<div class="a" style="left:1054px;top:111px;width:10px;height:377px;background:#dcdcdc"></div>
<div class="a" style="left:1054px;top:111px;width:10px;height:9.5px;background:#fff"><svg width="10" height="9"><path d="M2.5 6h5l-2.5-3z" fill="#555"/></svg></div>
<div class="a" style="left:1054px;top:255px;width:10px;height:22px;background:#fff;box-shadow:0 0 0 0.5px #bbb"></div>
<div class="a" style="left:1054px;top:478px;width:10px;height:10px;background:#fff"><svg width="10" height="10"><path d="M2.5 4h5l-2.5 3z" fill="#555"/></svg></div>
<svg class="a" style="left:1054px;top:490px" width="10" height="22"><path d="M2.5 4.5l2.5-2.5 2.5 2.5M2.5 7.5l2.5-2.5 2.5 2.5M2.5 8.5h5" stroke="#555" fill="none" stroke-width="1"/><path d="M2.5 13.5h5M2.5 14.5l2.5 2.5 2.5-2.5M2.5 17.5l2.5 2.5 2.5-2.5" stroke="#555" fill="none" stroke-width="1"/></svg>
<div class="a" style="left:278px;top:516px;width:320px;height:1px;background:#8a8a8a"></div>
<div class="a" style="left:169px;top:525px;width:896px;height:1px;background:#d0d0d0"></div>
<div class="a" style="left:176px;top:530px;font-size:10px;line-height:14px;color:#555;white-space:nowrap">单击此处添加备注</div>
  <div id="slide" class="a"><svg width="682" height="383" viewBox="0 0 682 383">
<use href="#base"/><use href="#extra"/>
<rect x="404" y="0" width="253" height="2" fill="url(#shl)"/>
<rect x="0" y="382" width="320" height="1.2" fill="#7a7a7a"/>
<text x="265.3" y="179.7" font-size="48" fill="#111" font-family="Liberation Sans, sans-serif">Part 3</text>
<g transform="translate(354.5,93) scale(1.12)" stroke-linejoin="round">
<path d="M5 0.5 L7 2.5 H5.8 V4.3 H7.7 V3.1 L9.7 5.1 L7.7 7.1 V5.9 H5.8 V7.7 H7 L5 9.7 L3 7.7 H4.2 V5.9 H2.3 V7.1 L0.3 5.1 L2.3 3.1 V4.3 H4.2 V2.5 H3 Z" fill="#111" stroke="#fff" stroke-width="0.6"/>
<path d="M5 5 L5 13.5 L7 11.8 L8.6 15 L9.8 14.4 L8.3 11.3 L10.8 11.1 Z" fill="#fff" stroke="#111" stroke-width="0.8"/>
</g>
<text x="248.3" y="225.3" font-size="31" fill="#111" font-family="Liberation Sans, sans-serif">不烦躁的理由</text>
</svg></div>
  <div id="status" class="a"><svg class="a" style="left:0;top:0" width="1065" height="12" viewBox="0 0 1065 12" font-family="Liberation Sans, sans-serif" font-size="8.4">
<text x="6" y="11.6" fill="#444">幻灯片 第 7 张，共 16 张</text>
<g stroke="#555" fill="none" stroke-width="0.9"><path d="M112.5 3.5h5v8h-5zM117.5 3.5h4M121.5 3.5v4M118 11l4-5"/></g>
<text x="134" y="11.6" fill="#444">中文(中国)</text>
<g stroke="#555" fill="none" stroke-width="0.9"><path d="M184 5a3 3 0 1 1 3 4M187 9l3 3"/><circle cx="185" cy="4" r="0.8" fill="#555"/></g>
<text x="195" y="11.6" fill="#444">辅助功能: 调查</text>
<g stroke="#555" fill="none" stroke-width="0.9"><path d="M732 6.5l3-2.5 3 2.5M732 9h6M732 11h6"/></g>
<text x="742.5" y="11.6" fill="#444">备注</text>
<path d="M773.5 3.5h9.5v6h-6l-2.5 2.5v-2.5h-1z" fill="#555"/>
<text x="785" y="11.6" fill="#444">批注</text>
<rect x="815" y="0" width="27" height="12" fill="#d3d3d3"/>
<g stroke="#777" fill="none" stroke-width="0.9"><path d="M824.5 3.5h8v9h-8zM826 6h5"/>
<path d="M851.5 3.5h3v3h-3zM855.5 3.5h3v3h-3zM851.5 8.5h3v3h-3zM855.5 8.5h3v3h-3z"/>
<path d="M879.5 3.5h8v9h-8zM883.5 3.5v9M881 6h1.5M885 6h1.5"/>
<path d="M906.5 3.5h9M908 3.5v5h6v-5M911 8.5v3"/>
</g>
<path d="M929 8h5" stroke="#555" stroke-width="0.9"/>
<rect x="938" y="7.5" width="70" height="1" fill="#9a9a9a"/>
<rect x="964" y="3.5" width="2.5" height="9" fill="#444"/>
<rect x="972.5" y="6" width="1" height="4" fill="#777"/>
<path d="M1011 8h6M1014 5v6" stroke="#555" stroke-width="0.9"/>
<text x="1025" y="11.6" fill="#444">77%</text>
<g stroke="#777" fill="none" stroke-width="0.9"><path d="M1052.5 3.5h8v9h-8z"/><path d="M1054 5l2 2M1059 5l-2 2M1054 11l2-2M1059 11l-2-2"/></g>
</svg>
</div>
</div>
<div id="toast" class="a"><svg class="a" style="left:0;top:0" width="250" height="35" viewBox="0 0 250 35" font-family="Liberation Sans, sans-serif">
<g opacity="0.75">
<rect x="14.5" y="10" width="5" height="9" rx="2.5" fill="#9a9da2"/>
<path d="M12.5 15a4.5 4.5 0 0 0 9 0M17 19.5v3.5M14 23h6" stroke="#9a9da2" stroke-width="1.2" fill="none"/>
<path d="M11 24L23 11" stroke="#e0453b" stroke-width="1.3"/>
</g>
<rect x="35.5" y="8" width="1" height="20" fill="#4a4d52"/>
<text x="45" y="22.5" font-size="12" fill="#fff">正在讲话:<tspan dx="1.5">李春美;</tspan></text>
<defs><linearGradient id="lg1" x1="0" y1="0" x2="1" y2="1"><stop offset="0" stop-color="#54575c"/><stop offset="1" stop-color="#3c3f43"/></linearGradient></defs>
<path d="M191.5 22.5 L200.5 13 L209.5 22.5 L217 14 L226.5 22.5" fill="none" stroke="url(#lg1)" stroke-width="11" stroke-linejoin="round" stroke-linecap="round"/>
</svg>
</div>
</body></html>
